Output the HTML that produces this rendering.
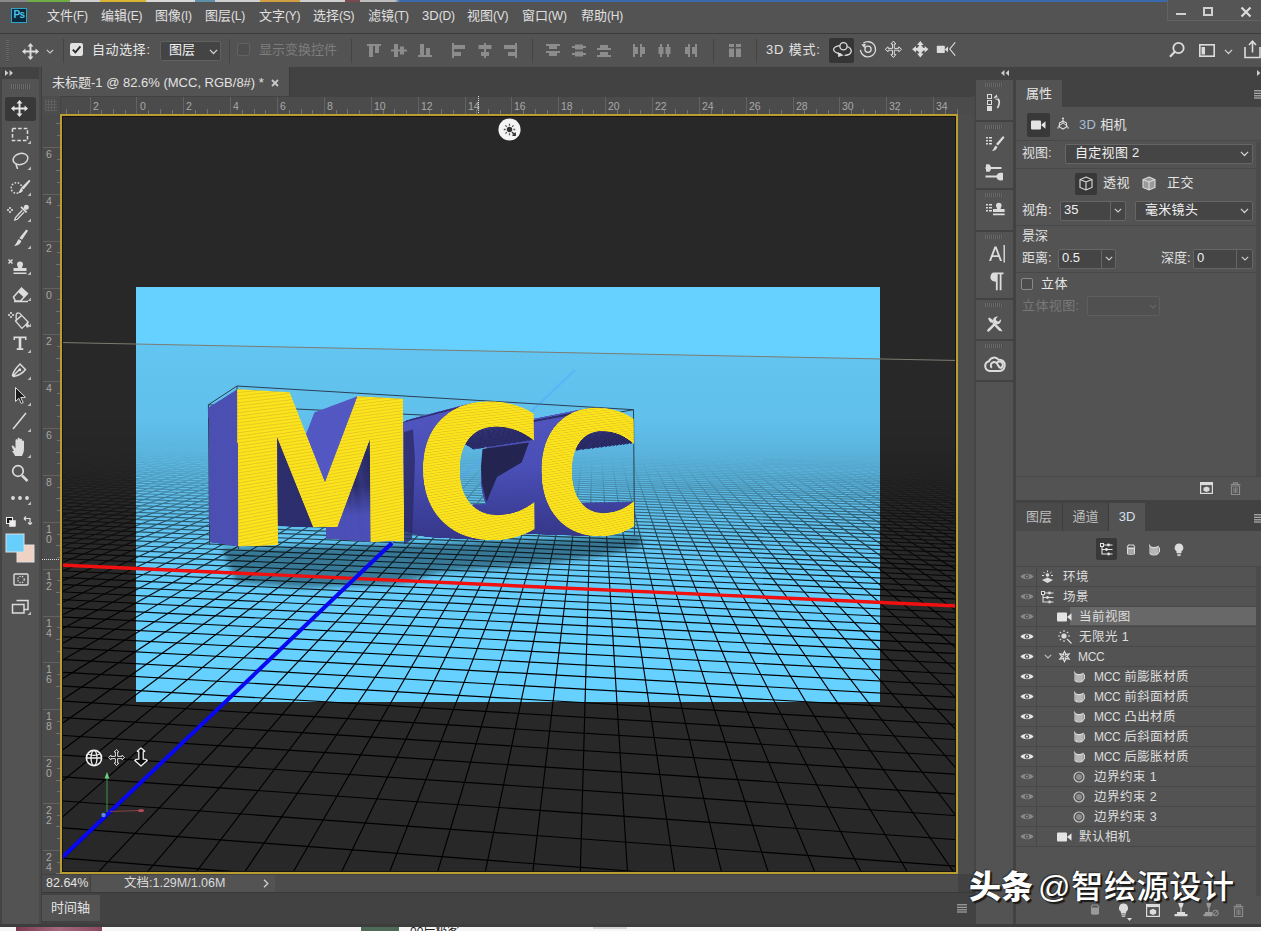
<!DOCTYPE html>
<html lang="zh-CN">
<head>
<meta charset="utf-8">
<title>Photoshop</title>
<style>
*{box-sizing:border-box;margin:0;padding:0}
html,body{width:1261px;height:931px;overflow:hidden;background:#535353}
body{position:relative;font-family:"Liberation Sans","Noto Sans CJK SC",sans-serif;font-size:13px;color:#dcdcdc;line-height:1}
.abs{position:absolute}
.t{position:absolute;white-space:nowrap;line-height:16px;height:16px}
.dk{background:#424242}
.ln{position:absolute;background:#3b3b3b}
svg{position:absolute;overflow:visible}
/* top */
#topstrip{left:0;top:0;width:1261px;height:1.5px;background:linear-gradient(90deg,#8a8a8a 0 28px,#6fae45 28px 70px,#cfcfcf 70px 100px,#d8b430 100px 146px,#d8d8d8 146px 195px,#5f8fa8 195px 215px,#d0d0d0 215px 260px,#d0a040 260px 300px,#cfcfcf 300px 345px,#7a4a52 345px 360px,#bdbdbd 360px 395px,#3a68ac 400px 100%)}
#menubar{left:0;top:2px;width:1261px;height:31px;background:#535353}
#optbar{left:0;top:34px;width:1261px;height:33px;background:#535353}
.menu .t{top:8px;font-size:13px;color:#e0e0e0}
.menu .t i{font-style:normal;font-size:12px;letter-spacing:-.2px}
/* left toolbar */
#toolbar{left:0;top:67px;width:41px;height:857px;background:#535353}
/* doc */
#tabbar{left:42px;top:67px;width:933px;height:29px;background:#424242}
#doctab{left:42px;top:67px;width:247px;height:29px;background:#535353}
#hruler{left:42px;top:96px;width:931px;height:18px;background:#4b4b4b;overflow:hidden;box-shadow:inset 0 1px 0 #424242}
#vruler{left:42px;top:114px;width:18px;height:760px;background:#4b4b4b;overflow:hidden}
.rn{position:absolute;font-size:10.5px;color:#a8a8a8;line-height:10px}
#canvas{left:60px;top:114px;width:898px;height:760px;background:#282828;overflow:hidden}
#canvasborder{left:60px;top:114px;width:898px;height:760px;border:2px solid #b99d32;box-shadow:inset 0 0 0 1px #15140f;pointer-events:none}
#status{left:42px;top:874px;width:933px;height:18px;background:#424242}
#timeline{left:42px;top:893px;width:933px;height:31px;background:#424242}
#bottomstrip{left:0;top:924px;width:1261px;height:7px;background:#f6f6f6;border-top:3px solid #3d3d3d}
/* right */
#rgap{left:975px;top:67px;width:286px;height:857px;background:#424242}
#iconcol{left:976px;top:80px;width:37px;height:844px;background:#535353}
#props{left:1016px;top:80px;width:245px;height:420px;background:#535353}
#lay{left:1016px;top:504px;width:245px;height:420px;background:#535353}
.ptabbar{position:absolute;left:0;top:0;width:245px;height:27px;background:#424242}
.ptab{position:absolute;top:0;height:27px;font-size:13px;line-height:27px;text-align:center;color:#bdbdbd;background:#4a4a4a;border-right:1px solid #3c3c3c}
.ptab.on{background:#535353;color:#e6e6e6;border-right:none}
.inp{position:absolute;background:#454545;border:1px solid #666;border-radius:2px;height:20px}
.row{position:absolute;left:0;width:245px;height:20px;border-top:1px solid #484848}
.row .t{top:2px;font-size:12.5px;color:#dedede}.row .t i{font-style:normal;font-size:12px;letter-spacing:-.35px}
.eyecol{position:absolute;left:0;top:62px;width:21px;height:281px;border-right:1px solid #484848}
</style>
</head>
<body>
<div id="topstrip" class="abs"></div>
<div id="menubar" class="abs menu"><div class="abs" style="left:11px;top:6px;width:16px;height:15px;background:#0a2a3c;border:1px solid #2fa3c8;font-size:10px;line-height:12px;color:#4cc3ea;text-align:center;font-weight:bold;letter-spacing:-.5px">Ps</div><div class="t" style="left:47px;top:6px;">文件<i>(F)</i></div><div class="t" style="left:101px;top:6px;">编辑<i>(E)</i></div><div class="t" style="left:155px;top:6px;">图像<i>(I)</i></div><div class="t" style="left:205px;top:6px;">图层<i>(L)</i></div><div class="t" style="left:259px;top:6px;">文字<i>(Y)</i></div><div class="t" style="left:313px;top:6px;">选择<i>(S)</i></div><div class="t" style="left:368px;top:6px;">滤镜<i>(T)</i></div><div class="t" style="left:422px;top:6px;">3D<i>(D)</i></div><div class="t" style="left:467px;top:6px;">视图<i>(V)</i></div><div class="t" style="left:522px;top:6px;">窗口<i>(W)</i></div><div class="t" style="left:581px;top:6px;">帮助<i>(H)</i></div><div class="abs" style="left:1167px;top:-2px;width:95px;height:21px;border:1px solid #636363;border-top:none;background:#555"></div><div class="abs" style="left:1176px;top:11px;width:10px;height:2px;background:#d0d0d0"></div><div class="abs" style="left:1203px;top:5px;width:10px;height:9px;border:2px solid #d0d0d0;border-top-width:2px"></div><svg style="left:1240px;top:4px" width="12" height="12" viewBox="0 0 12 12"><path d="M1.5 1.5l9 9M10.5 1.5l-9 9" stroke="#dcdcdc" stroke-width="2.2" fill="none"/></svg></div><div class="ln" style="left:0;top:33px;width:1261px;height:1px;background:#3a3a3a"></div>
<div id="optbar" class="abs"><div class="abs" style="left:6px;top:6px;width:3px;height:22px;background:repeating-linear-gradient(180deg,#6a6a6a 0 1px,#4a4a4a 1px 2px)"></div><svg style="left:22px;top:9px" width="17" height="17" viewBox="0 0 16 16"><path d="M8 0l2.8 3.2H8.9v3.9h3.9V5.2L16 8l-3.2 2.8V8.9H8.9v3.9h1.9L8 16l-2.8-3.2h1.9V8.9H3.2v1.9L0 8l3.2-2.8v1.9h3.9V3.2H5.2z" fill="#dcdcdc"/></svg><svg style="left:46px;top:15px" width="8" height="4.8" viewBox="0 0 10 6"><path d="M1 1l4 4 4-4" stroke="#cfcfcf" stroke-width="1.4" fill="none"/></svg><div class="ln" style="left:63px;top:5px;width:1px;height:24px;background:#444"></div><div class="abs" style="left:70px;top:9px;width:13px;height:13px;background:#e2e2e2;border-radius:2px"></div><svg style="left:71px;top:10px" width="11" height="11" viewBox="0 0 11 11"><path d="M1.8 5.6l2.6 2.8 5-6" stroke="#2a2a2a" stroke-width="1.9" fill="none"/></svg><div class="t" style="left:92px;top:8px;font-size:13px;color:#e6e6e6;letter-spacing:.6px">自动选择:</div><div class="inp" style="left:160px;top:7px;width:61px;height:20px;background:#444;border-color:#606060"></div><div class="t" style="left:169px;top:8px;font-size:13px;color:#f0f0f0">图层</div><svg style="left:209px;top:15px" width="9" height="5.4" viewBox="0 0 10 6"><path d="M1 1l4 4 4-4" stroke="#d0d0d0" stroke-width="1.4" fill="none"/></svg><div class="ln" style="left:229px;top:5px;width:1px;height:24px;background:#444"></div><div class="abs" style="left:237px;top:9px;width:13px;height:13px;border:1px solid #626262;border-radius:2px;background:#4e4e4e"></div><div class="t" style="left:259px;top:8px;font-size:13px;color:#7d7d7d">显示变换控件</div><div class="ln" style="left:351px;top:5px;width:1px;height:24px;background:#444"></div><svg style="left:366px;top:9px" width="16" height="15" viewBox="0 0 16 15"><rect x="1" y="1" width="14" height="2" fill="#8c8c8c"/><rect x="3" y="3" width="4" height="11" fill="#8c8c8c"/><rect x="9" y="3" width="4" height="7" fill="#8c8c8c"/></svg><svg style="left:391px;top:9px" width="16" height="15" viewBox="0 0 16 15"><rect x="0" y="6.5" width="16" height="2" fill="#8c8c8c"/><rect x="3" y="1" width="4" height="13" fill="#8c8c8c"/><rect x="9" y="3.5" width="4" height="8" fill="#8c8c8c"/></svg><svg style="left:417px;top:9px" width="16" height="15" viewBox="0 0 16 15"><rect x="1" y="12" width="14" height="2" fill="#8c8c8c"/><rect x="3" y="1" width="4" height="11" fill="#8c8c8c"/><rect x="9" y="5" width="4" height="7" fill="#8c8c8c"/></svg><svg style="left:451px;top:9px" width="16" height="15" viewBox="0 0 16 15"><rect x="1" y="0" width="2" height="15" fill="#8c8c8c"/><rect x="3" y="2" width="11" height="4" fill="#8c8c8c"/><rect x="3" y="9" width="7" height="4" fill="#8c8c8c"/></svg><svg style="left:477px;top:9px" width="16" height="15" viewBox="0 0 16 15"><rect x="7" y="0" width="2" height="15" fill="#8c8c8c"/><rect x="1.5" y="2" width="13" height="4" fill="#8c8c8c"/><rect x="4" y="9" width="8" height="4" fill="#8c8c8c"/></svg><svg style="left:502px;top:9px" width="16" height="15" viewBox="0 0 16 15"><rect x="13" y="0" width="2" height="15" fill="#8c8c8c"/><rect x="2" y="2" width="11" height="4" fill="#8c8c8c"/><rect x="6" y="9" width="7" height="4" fill="#8c8c8c"/></svg><svg style="left:545px;top:9px" width="16" height="15" viewBox="0 0 16 15"><rect x="1" y="1" width="14" height="2" fill="#8c8c8c"/><rect x="4" y="3" width="8" height="3" fill="#8c8c8c"/><rect x="1" y="8" width="14" height="2" fill="#8c8c8c"/><rect x="4" y="10" width="8" height="3" fill="#8c8c8c"/></svg><svg style="left:571px;top:9px" width="16" height="15" viewBox="0 0 16 15"><rect x="1" y="3" width="14" height="2" fill="#8c8c8c"/><rect x="4" y="1.5" width="8" height="5" fill="#8c8c8c"/><rect x="1" y="10" width="14" height="2" fill="#8c8c8c"/><rect x="4" y="8.5" width="8" height="5" fill="#8c8c8c"/></svg><svg style="left:596px;top:9px" width="16" height="15" viewBox="0 0 16 15"><rect x="1" y="5" width="14" height="2" fill="#8c8c8c"/><rect x="4" y="2" width="8" height="3" fill="#8c8c8c"/><rect x="1" y="12" width="14" height="2" fill="#8c8c8c"/><rect x="4" y="9" width="8" height="3" fill="#8c8c8c"/></svg><svg style="left:632px;top:9px" width="16" height="15" viewBox="0 0 16 15"><rect x="1" y="1" width="2" height="13" fill="#8c8c8c"/><rect x="3" y="4" width="3" height="7" fill="#8c8c8c"/><rect x="8" y="1" width="2" height="13" fill="#8c8c8c"/><rect x="10" y="4" width="3" height="7" fill="#8c8c8c"/></svg><svg style="left:657px;top:9px" width="16" height="15" viewBox="0 0 16 15"><rect x="3" y="1" width="2" height="13" fill="#8c8c8c"/><rect x="1.5" y="4" width="5" height="7" fill="#8c8c8c"/><rect x="10" y="1" width="2" height="13" fill="#8c8c8c"/><rect x="8.5" y="4" width="5" height="7" fill="#8c8c8c"/></svg><svg style="left:683px;top:9px" width="16" height="15" viewBox="0 0 16 15"><rect x="5" y="1" width="2" height="13" fill="#8c8c8c"/><rect x="2" y="4" width="3" height="7" fill="#8c8c8c"/><rect x="12" y="1" width="2" height="13" fill="#8c8c8c"/><rect x="9" y="4" width="3" height="7" fill="#8c8c8c"/></svg><svg style="left:727px;top:9px" width="16" height="15" viewBox="0 0 16 15"><rect x="2" y="1" width="5" height="13" fill="#8c8c8c"/><rect x="9" y="1" width="5" height="13" fill="#8c8c8c"/><rect x="2" y="4" width="12" height="1.5" fill="#535353"/></svg><div class="ln" style="left:532px;top:5px;width:1px;height:24px;background:#444"></div><div class="ln" style="left:713px;top:5px;width:1px;height:24px;background:#444"></div><div class="ln" style="left:756px;top:5px;width:1px;height:24px;background:#444"></div><div class="t" style="left:766px;top:8px;font-size:13px;color:#e0e0e0;letter-spacing:.8px">3D 模式:</div><div class="abs" style="left:829px;top:4px;width:25px;height:25px;background:#353535;border-radius:2px"></div><svg style="left:826px;top:4px" width="134" height="26" viewBox="826 38 134 26"><g fill="none" stroke="#dcdcdc" stroke-width="1.3"><circle cx="843.5" cy="46.3" r="3.6"/><path d="M839.9 45.6c-3.6 0.200-6.800 2-6.300 4.200 0.500 2.200 4 3.600 7.500 4.400M847.200 46.500c2.500 1 4.200 2.800 4 4.800-0.300 2.400-3.300 3.800-6.500 4.100" /><circle cx="868" cy="49.3" r="7.600" stroke-dasharray="40 7.800" transform="rotate(-128 868 49.3)"/><circle cx="868" cy="49.3" r="3.100"/><path d="M893.4 41.1L895.9 44.0L894.3 44.0L894.3 48.4L898.7 48.4L898.7 46.8L901.6 49.3L898.7 51.8L898.7 50.2L894.3 50.2L894.3 54.6L895.9 54.6L893.4 57.5L890.9 54.6L892.5 54.6L892.5 50.2L888.1 50.2L888.1 51.8L885.2 49.3L888.1 46.8L888.1 48.4L892.5 48.4L892.5 44.0L890.9 44.0z" stroke-width="1"/><path d="M955.200 42.300l-5.400 6.700 5.400 6.700" stroke-width="1.100"/></g><g fill="#dcdcdc"><path d="M838 52.300l5.800 2.900-5.600 1.800z"/><path d="M861.300 44.600l4.600-.9-1.500 4.300z"/><circle cx="920.300" cy="49.200" r="3.100"/><path d="M920.300 41l3.300 3.900h-2v2h-2.600v-2h-2zM920.300 57.400l3.300-3.900h-2v-2h-2.600v2h-2zM912.100 49.200l3.900-3.300v2h2v2.600h-2v2zM928.500 49.200l-3.900-3.300v2h-2v2.600h2v2z"/><rect x="936.800" y="45.700" width="8" height="7.400" rx=".8"/><path d="M944.800 49.400l3.200-2.900v5.800z"/></g></svg><svg style="left:1168px;top:7px" width="18" height="18" viewBox="0 0 18 18"><circle cx="10.5" cy="7" r="5.2" fill="none" stroke="#dcdcdc" stroke-width="1.8"/><path d="M6.8 10.8L2 15.8" stroke="#dcdcdc" stroke-width="2.2"/></svg><svg style="left:1199px;top:10px" width="16" height="13" viewBox="0 0 16 13"><rect x=".8" y=".8" width="14.4" height="11.4" fill="none" stroke="#dcdcdc" stroke-width="1.6"/><rect x="2.5" y="3" width="3.5" height="7.5" fill="#dcdcdc"/></svg><svg style="left:1224px;top:15px" width="9" height="5.4" viewBox="0 0 10 6"><path d="M1 1l4 4 4-4" stroke="#cfcfcf" stroke-width="1.4" fill="none"/></svg><svg style="left:1244px;top:6px" width="17" height="19" viewBox="0 0 17 19"><path d="M1 7v10.5h15V7" fill="none" stroke="#dcdcdc" stroke-width="1.6"/><path d="M8.5 12.5V2M5 5l3.5-3.8L12 5" fill="none" stroke="#dcdcdc" stroke-width="1.6"/></svg></div>
<div id="toolbar" class="abs"><div class="abs dk" style="left:0;top:0;width:41px;height:12px"></div><div class="abs" style="left:0;top:0;width:2px;height:857px;background:#444"></div><div class="abs" style="left:39px;top:0;width:2px;height:857px;background:#4a4a4a"></div><svg style="left:5px;top:3px" width="9" height="6" viewBox="0 0 9 6"><path d="M0 0l3.4 3L0 6zM4.6 0L8 3 4.6 6z" fill="#cfcfcf"/></svg><div class="abs" style="left:11px;top:17px;width:19px;height:5px;background:repeating-linear-gradient(90deg,#6c6c6c 0 1px,#4a4a4a 1px 2px)"></div><div class="abs" style="left:5px;top:30px;width:31px;height:24px;background:#383838;border-radius:3px"></div><svg style="left:11px;top:33px" width="17" height="17" viewBox="0 0 16 16"><path d="M8 0l2.8 3.2H8.9v3.9h3.9V5.2L16 8l-3.2 2.8V8.9H8.9v3.9h1.9L8 16l-2.8-3.2h1.9V8.9H3.2v1.9L0 8l3.2-2.8v1.9h3.9V3.2H5.2z" fill="#e6e6e6"/></svg>
<svg style="left:0;top:0" width="41" height="560" viewBox="0 67 41 560">
<g fill="none" stroke="#dcdcdc" stroke-width="1.5">
<rect x="12.500" y="128.500" width="15" height="12" stroke-dasharray="3.6 2"/>
<ellipse cx="20.500" cy="159" rx="7.500" ry="5.500" transform="rotate(-15 20.500 159)"/>
<path d="M16.500 163.500c-1.500 1.500 1 3.500 1 5.500"/>
<circle cx="16.500" cy="188" r="5.300" stroke-dasharray="1.600 1.600"/>

<path d="M22.300 210.300l-6.800 7.200-.8 2.600 2.600-.8 6.800-7.200" stroke-width="1.300"/><path d="M21 206.800l5.600 5.600" stroke-width="1.800"/>

<path d="M13.500 297l8-9 6 5.500-7 7.500h-5zM14 301.500h14"/>
<path d="M15.500 321l6.200-5.600 6.600 6.800-6.400 6.200zM21.700 315.400c-2.600-4-5.800-3-5.600.8l.2 4" stroke-width="1.300"/>
<path d="M12.500 375.500c1-5 4-8 7.500-11.500l5.500 5.500c-3 4-7 6-12 7zM13 376l6-6"/>
<circle cx="19.800" cy="369.800" r="1.500" fill="#dcdcdc" stroke="none"/>
<path d="M13 429l13-16"/>
<circle cx="18" cy="471" r="5.300" stroke-width="1.700"/><path d="M22 475.500l5.500 5.500" stroke-width="2.500"/>
<rect x="14" y="574" width="14" height="11" rx="1" stroke-width="1.400"/><circle cx="21" cy="579.500" r="3.200" stroke-dasharray="1.300 1.300" stroke-width="1.200"/>
<path d="M16.500 600.500h11.500v9h-4M12.500 604.500h11.500v8.500h-11.500z" stroke-width="1.500"/>
</g>
<g fill="#dcdcdc">
<path d="M29.200 179.800l1.300 1.200-6.800 8.300-2.300-1.700zM20.800 188.300l2.300 1.700c-1 2.300-2.800 3.200-5 3.100 1.300-1.200 1.500-2.800 2.700-4.800z"/>
<circle cx="26.300" cy="207.300" r="2.500"/><path d="M23.800 207.600l2.200 2.200 1.500-1.500-2.200-2.200z"/><path d="M26.300 229.500l1.700 1.300-6 9-2.600-1.900zM18.800 239l2.600 1.900c-1 2.800-3.200 4.600-7.400 5.300 1.800-1.700 2.800-4.300 4.800-7.200z"/>
<path d="M17 264.500a3 3 0 1 1 6 0c0 1.500-1 2-1 3.500h4.500v3h-13v-3h4.500c0-1.500-1-2-1-3.500zM13.500 272.500h13v1.500h-13z"/>
<path d="M9 259l1.500 1.500 1.500-1.500 1 1-1.500 1.500 1.500 1.500-1 1-1.500-1.500-1.500 1.500-1-1 1.500-1.500-1.500-1.500z"/>
<path d="M21.500 288l6 5.500-3.500 4-6-5.500z"/>
<path d="M10 312h2v2h-2zM12 314h2v2h-2zM8 314h2v2h-2zM10 316h2v2h-2z" opacity=".8"/>
<path d="M27 322c1.500 2 2 3 2 4a1.500 1.500 0 0 1-3 0c0-1 .3-2 1-4z"/>
<path d="M13.500 336.500h13v3.500h-1.500v-1.700h-3.700v10h2v1.700h-6.600v-1.700h2v-10h-3.700v1.700h-1.500z"/>
<path d="M15.500 387.500l0 14 3.300-3.200 2.400 5.200 2-0.900-2.400-5.100 4.700-.2z" fill="#1c1c1c" stroke="#dcdcdc" stroke-width="1"/>
<path transform="translate(0 3)" d="M14 448c-1.500-3-3-5-2-5.500 1.200-.6 2.500 1.500 3.500 3v-8c0-1.600 2-1.600 2.100 0v-1.500c0-1.600 2.100-1.600 2.200 0v1c0-1.600 2.100-1.600 2.200 0v1.500c0-1.500 2-1.500 2 0v7c0 4-1.500 6-2 7.500h-7c-.5-1.500-1.500-3-3-5z"/>
<circle cx="13" cy="498" r="1.900"/><circle cx="20" cy="498" r="1.900"/><circle cx="27" cy="498" r="1.900"/>
<path d="M31 144l0 -3.5 -3.5 3.5z" fill="#bdbdbd"/><path d="M31 170l0 -3.5 -3.5 3.5z" fill="#bdbdbd"/><path d="M31 196l0 -3.5 -3.5 3.5z" fill="#bdbdbd"/><path d="M31 222l0 -3.5 -3.5 3.5z" fill="#bdbdbd"/><path d="M31 249l0 -3.5 -3.5 3.5z" fill="#bdbdbd"/><path d="M31 275l0 -3.5 -3.5 3.5z" fill="#bdbdbd"/><path d="M31 301l0 -3.5 -3.5 3.5z" fill="#bdbdbd"/><path d="M31 327l0 -3.5 -3.5 3.5z" fill="#bdbdbd"/><path d="M31 353l0 -3.5 -3.5 3.5z" fill="#bdbdbd"/><path d="M31 380l0 -3.5 -3.5 3.5z" fill="#bdbdbd"/><path d="M31 406l0 -3.5 -3.5 3.5z" fill="#bdbdbd"/><path d="M31 432l0 -3.5 -3.5 3.5z" fill="#bdbdbd"/><path d="M31 458l0 -3.5 -3.5 3.5z" fill="#bdbdbd"/><path d="M31 505l0 -3.5 -3.5 3.5z" fill="#bdbdbd"/><path d="M31 615l0 -3.5 -3.5 3.5z" fill="#bdbdbd"/>
</g>
<path d="M9 207h2v2h-2zM11 209h2v2h-2zM7 209h2v2h-2zM9 211h2v2h-2z" fill="#dcdcdc" opacity=".8"/>
<rect x="6.500" y="517.500" width="6" height="6" fill="#111" stroke="#eee" stroke-width="1"/><rect x="9.500" y="520.500" width="6" height="6" fill="#eee" stroke="#eee" stroke-width=".5"/>
<path d="M24 518.500h6v6M24 518.500l2-2M24 518.500l2 2M30 524.500l-2-2M30 524.500l2-2" stroke="#dcdcdc" stroke-width="1.200" fill="none"/>
<rect x="17" y="545" width="17" height="17" fill="#efd2c3" stroke="#ddd" stroke-width="1"/>
<rect x="6" y="534" width="18" height="18" fill="#66cffe" stroke="#ddd" stroke-width="1"/>

</svg>
</div><div class="ln" style="left:41px;top:67px;width:1px;height:857px;background:#3e3e3e"></div>
<div id="tabbar" class="abs"></div><div id="doctab" class="abs"><div class="t" style="left:10px;top:8px;font-size:13px;color:#e2e2e2">未标题-1 @ 82.6% (MCC, RGB/8#) *</div><svg style="left:229px;top:12px" width="8" height="8" viewBox="0 0 8 8"><path d="M1 1l6 6M7 1L1 7" stroke="#c8c8c8" stroke-width="1.8"/></svg></div><div class="ln" style="left:289px;top:67px;width:1px;height:29px;background:#3a3a3a"></div><div id="hruler" class="abs"><div class="abs" style="left:0;top:0;width:18px;height:18px;background:#4d4d4d"></div><div class="abs" style="left:3px;top:3px;width:12px;height:12px;background:repeating-linear-gradient(90deg,#5e5e5e 0 1px,transparent 1px 3px),repeating-linear-gradient(0deg,#5e5e5e 0 1px,transparent 1px 3px)"></div><svg style="left:0;top:0" width="916" height="18" viewBox="42 96 916 18"><path d="M90.5 97v17M136.5 97v17M183.5 97v17M230.5 97v17M277.5 97v17M324.5 97v17M371.5 97v17M418.5 97v17M465.5 97v17M511.5 97v17M558.5 97v17M605.5 97v17M652.5 97v17M699.5 97v17M746.5 97v17M793.5 97v17M839.5 97v17M886.5 97v17M933.5 97v17" stroke="#626262" stroke-width="1" fill="none"/><path d="M66.5 109v5M78.5 110v4M101.5 110v4M113.5 109v5M125.5 110v4M148.5 110v4M160.5 109v5M172.5 110v4M195.5 110v4M207.5 109v5M219.5 110v4M242.5 110v4M254.5 109v5M265.5 110v4M289.5 110v4M301.5 109v5M312.5 110v4M336.5 110v4M347.5 109v5M359.5 110v4M383.5 110v4M394.5 109v5M406.5 110v4M429.5 110v4M441.5 109v5M453.5 110v4M476.5 110v4M488.5 109v5M500.5 110v4M523.5 110v4M535.5 109v5M547.5 110v4M570.5 110v4M582.5 109v5M593.5 110v4M617.5 110v4M629.5 109v5M640.5 110v4M664.5 110v4M675.5 109v5M687.5 110v4M711.5 110v4M722.5 109v5M734.5 110v4M757.5 110v4M769.5 109v5M781.5 110v4M804.5 110v4M816.5 109v5M828.5 110v4M851.5 110v4M863.5 109v5M875.5 110v4M898.5 110v4M910.5 109v5M921.5 110v4M945.5 110v4M957.5 109v5" stroke="#727272" stroke-width="1" fill="none"/><path d="M60.5 96v18" stroke="#444" stroke-width="1"/></svg><div class="rn" style="left:51px;top:5px">2</div><div class="rn" style="left:98px;top:5px">0</div><div class="rn" style="left:144px;top:5px">2</div><div class="rn" style="left:191px;top:5px">4</div><div class="rn" style="left:238px;top:5px">6</div><div class="rn" style="left:285px;top:5px">8</div><div class="rn" style="left:332px;top:5px">10</div><div class="rn" style="left:379px;top:5px">12</div><div class="rn" style="left:426px;top:5px">14</div><div class="rn" style="left:472px;top:5px">16</div><div class="rn" style="left:519px;top:5px">18</div><div class="rn" style="left:566px;top:5px">20</div><div class="rn" style="left:613px;top:5px">22</div><div class="rn" style="left:660px;top:5px">24</div><div class="rn" style="left:707px;top:5px">26</div><div class="rn" style="left:754px;top:5px">28</div><div class="rn" style="left:800px;top:5px">30</div><div class="rn" style="left:847px;top:5px">32</div><div class="rn" style="left:894px;top:5px">34</div><div class="abs" style="left:436px;top:0;width:1px;height:18px;background:repeating-linear-gradient(180deg,#ddd 0 1px,transparent 1px 2px)"></div></div><div id="vruler" class="abs"><svg style="left:0;top:0" width="18" height="760" viewBox="42 114 18 760"><path d="M43 147.5h17M43 194.5h17M43 241.5h17M43 288.5h17M43 334.5h17M43 381.5h17M43 428.5h17M43 475.5h17M43 522.5h17M43 569.5h17M43 616.5h17M43 662.5h17M43 709.5h17M43 756.5h17M43 803.5h17M43 850.5h17" stroke="#626262" stroke-width="1" fill="none"/><path d="M56 123.5h4M57 135.5h3M57 159.5h3M56 170.5h4M57 182.5h3M57 205.5h3M56 217.5h4M57 229.5h3M57 252.5h3M56 264.5h4M57 276.5h3M57 299.5h3M56 311.5h4M57 323.5h3M57 346.5h3M56 358.5h4M57 370.5h3M57 393.5h3M56 405.5h4M57 416.5h3M57 440.5h3M56 452.5h4M57 463.5h3M57 487.5h3M56 498.5h4M57 510.5h3M57 534.5h3M56 545.5h4M57 557.5h3M57 580.5h3M56 592.5h4M57 604.5h3M57 627.5h3M56 639.5h4M57 651.5h3M57 674.5h3M56 686.5h4M57 698.5h3M57 721.5h3M56 733.5h4M57 744.5h3M57 768.5h3M56 780.5h4M57 791.5h3M57 815.5h3M56 826.5h4M57 838.5h3M57 862.5h3M56 873.5h4" stroke="#727272" stroke-width="1" fill="none"/></svg><div class="rn" style="left:4px;top:35px">6</div><div class="rn" style="left:4px;top:82px">4</div><div class="rn" style="left:4px;top:129px">2</div><div class="rn" style="left:4px;top:176px">0</div><div class="rn" style="left:4px;top:222px">2</div><div class="rn" style="left:4px;top:269px">4</div><div class="rn" style="left:4px;top:316px">6</div><div class="rn" style="left:4px;top:363px">8</div><div class="rn" style="left:4px;top:410px">1</div><div class="rn" style="left:4px;top:420px">0</div><div class="rn" style="left:4px;top:457px">1</div><div class="rn" style="left:4px;top:467px">2</div><div class="rn" style="left:4px;top:504px">1</div><div class="rn" style="left:4px;top:514px">4</div><div class="rn" style="left:4px;top:550px">1</div><div class="rn" style="left:4px;top:560px">6</div><div class="rn" style="left:4px;top:597px">1</div><div class="rn" style="left:4px;top:607px">8</div><div class="rn" style="left:4px;top:644px">2</div><div class="rn" style="left:4px;top:654px">0</div><div class="rn" style="left:4px;top:691px">2</div><div class="rn" style="left:4px;top:701px">2</div><div class="rn" style="left:4px;top:738px">2</div><div class="rn" style="left:4px;top:748px">4</div><div class="abs" style="left:0;top:445px;width:18px;height:1px;background:repeating-linear-gradient(90deg,#ddd 0 1px,transparent 1px 2px)"></div></div><div id="canvas" class="abs"><svg style="left:0;top:0" width="898" height="760" viewBox="60 114 898 760"><defs><linearGradient id="sky" gradientUnits="userSpaceOnUse" x1="0" y1="340" x2="0" y2="640"><stop offset="0" stop-color="#63c5f1"/><stop offset="0.25" stop-color="#61c0ec"/><stop offset="0.45" stop-color="#5fbde8"/><stop offset="0.62" stop-color="#61c3f0"/><stop offset="0.8" stop-color="#65cdfb"/><stop offset="1" stop-color="#66d0ff"/></linearGradient><linearGradient id="fade" gradientUnits="userSpaceOnUse" x1="0" y1="420" x2="0" y2="640"><stop offset="0" stop-color="#fff" stop-opacity="0"/><stop offset="0.14" stop-color="#fff" stop-opacity=".05"/><stop offset="0.23" stop-color="#fff" stop-opacity=".13"/><stop offset="0.32" stop-color="#fff" stop-opacity=".28"/><stop offset="0.41" stop-color="#fff" stop-opacity=".46"/><stop offset="0.5" stop-color="#fff" stop-opacity=".62"/><stop offset="0.6" stop-color="#fff" stop-opacity=".76"/><stop offset="0.75" stop-color="#fff" stop-opacity=".9"/><stop offset="1" stop-color="#fff" stop-opacity="1"/></linearGradient><mask id="gm" maskUnits="userSpaceOnUse" x="60" y="114" width="898" height="760"><rect x="60" y="114" width="898" height="760" fill="url(#fade)"/></mask><filter id="bl" x="-20%" y="-50%" width="140%" height="200%"><feGaussianBlur stdDeviation="2.6"/></filter></defs><rect x="136" y="287" width="744" height="415" fill="#66d1ff"/><path d="M136 344L880 358.9V702H136z" fill="url(#sky)"/><path d="M60 342.5L958 360.5" stroke="#7c7c72" stroke-width="1" fill="none"/><g filter="url(#bl)" opacity=".5"><path d="M222 548L300 547 420 544 540 540 640 536 642 546 600 556 530 566 440 572 400 584 300 588 236 582z" fill="#0a2a38"/></g><g mask="url(#gm)" stroke="#000" stroke-width="1.15" fill="none"><path d="M60 857.8L958 929.5M60 827.6L958 896.1M60 800.7L958 866.4M60 776.6L958 839.8M60 754.8L958 815.8M60 735.2L958 794.1M60 717.3L958 774.4M60 700.9L958 756.3M60 685.9L958 739.8M60 672.1L958 724.5M60 659.4L958 710.4M60 647.6L958 697.4M60 636.6L958 685.3M60 626.4L958 674M60 616.8L958 663.5M60 607.9L958 653.6M60 599.5L958 644.4M60 591.7L958 635.7M60 584.3L958 627.5M60 577.3L958 619.8M60 570.7L958 612.5M60 564.4L958 605.6M60 558.5L958 599.1M60 552.9L958 592.9M60 547.5L958 587M60 542.5L958 581.4M60 537.6L958 576M60 533L958 570.9M60 528.6L958 566.1M60 524.4L958 561.4M60 520.4L958 557M60 516.5L958 552.7M60 512.8L958 548.7M60 509.3L958 544.7M60 505.9L958 541M60 502.6L958 537.4M60 499.5L958 533.9M60 496.4L958 530.6M60 493.5L958 527.3M60 490.7L958 524.2M60 488L958 521.2M60 485.4L958 518.4M60 482.9L958 515.6M60 480.4L958 512.9M60 478.1L958 510.3M60 475.8L958 507.7M60 473.6L958 505.3M60 471.4L958 502.9M60 469.3L958 500.7M60 467.3L958 498.4M60 465.4L958 496.3M60 463.5L958 494.2M60 461.7L958 492.2M60 459.9L958 490.2M60 458.2L958 488.3M60 456.5L958 486.4M60 454.8L958 484.6M60 453.2L958 482.9M60 451.7L958 481.2M60 450.2L958 479.5M60 448.7L958 477.9M60 447.3L958 476.3M60 445.9L958 474.8M60 444.5L958 473.3M60 443.2L958 471.8M60 441.9L958 470.4M60 440.7L958 469M60 439.4L958 467.6M60 438.2L958 466.3M60 437.1L958 465M60 435.9L958 463.8M60 434.8L958 462.5M60 433.7L958 461.3M60 432.7L958 460.1M60 431.6L958 459M60 430.6L958 457.9M60 429.6L958 456.8M60 428.6L958 455.7M60 427.6L958 454.6M60 426.7L958 453.6M60 425.8L958 452.6M60 424.9L958 451.6M60 424L958 450.6M60 423.2L958 449.7M60 422.3L958 448.7M60 421.5L958 447.8M60 420.7L958 446.9M60 419.9L958 446M60 419.1L958 445.2M60 418.3L958 444.3M60 417.6L958 443.5M60 416.8L958 442.7M60 416.1L958 441.9M60 415.4L958 441.1M60 414.7L958 440.3M60 414L958 439.6M60 413.3L958 438.8M60 412.7L958 438.1M60 412L958 437.4M60 411.4L958 436.7M60 410.8L958 436M60 410.1L958 435.3M60 409.5L958 434.6M60 408.9L958 434M60 408.4L958 433.3M60 407.8L958 432.7M60 407.2L958 432.1M60 406.6L958 431.4M60 406.1L958 430.8M60 405.6L958 430.2M60 405L958 429.7M60 404.5L958 429.1M60 404L958 428.5M60 403.5L958 427.9M60 403L958 427.4M60 402.5L958 426.9M60 402L958 426.3M60 401.5L958 425.8M60 401.1L958 425.3M60 400.6L958 424.8M60 400.1L958 424.3M60 399.7L958 423.8M60 399.2L958 423.3M60 398.8L958 422.8M60 398.4L958 422.3M60 398L958 421.8M60 397.5L958 421.4M60 397.1L958 420.9M60 396.7L958 420.5M60 396.3L958 420M60 395.9L958 419.6M60 395.5L958 419.2M60 395.1L958 418.7M60 394.8L958 418.3M60 394.4L958 417.9M60 394L958 417.5M60 393.7L958 417.1M60 393.3L958 416.7M60 392.9L958 416.3M60 392.6L958 415.9M60 392.2L958 415.5M60 391.9L958 415.2M60 391.6L958 414.8M60 391.2L958 414.4M60 390.9L958 414.1M60 390.6L958 413.7M60 390.2L958 413.3M60 389.9L958 413M60 389.6L958 412.6M60 389.3L958 412.3M60 389L958 412M60 388.7L958 411.6M60 388.4L958 411.3M60 388.1L958 411M60 387.8L958 410.7M60 387.5L958 410.3M60 387.2L958 410M60 387L958 409.7M60 386.7L958 409.4M60 386.4L958 409.1M60 386.1L958 408.8M60 385.9L958 408.5M60 385.6L958 408.2M60 385.3L958 407.9M60 385.1L958 407.6M60 384.8L958 407.3M60 384.6L958 407.1M60 384.3L958 406.8M60 384.1L958 406.5M60 383.8L958 406.2M60 383.6L958 406M60 383.3L958 405.7M60 383.1L958 405.4M60 382.9L958 405.2M60 382.6L958 404.9M60 382.4L958 404.7M60 382.2L958 404.4M60 381.9L958 404.2M60 381.7L958 403.9M60 381.5L958 403.7M60 381.3L958 403.4M60 381.1L958 403.2M60 380.8L958 403M60 380.6L958 402.7M60 380.4L958 402.5M60 380.2L958 402.3M60 380L958 402M60 379.8L958 401.8M60 379.6L958 401.6M60 379.4L958 401.4M60 379.2L958 401.1M60 379L958 400.9M60 378.8L958 400.7M60 378.6L958 400.5M60 378.4L958 400.3M60 378.2L958 400.1M60 378L958 399.9M60 377.9L958 399.7M60 377.7L958 399.5M60 377.5L958 399.3M60 377.3L958 399.1M60 377.1L958 398.9M60 377L958 398.7M60 376.8L958 398.5M60 376.6L958 398.3M60 376.4L958 398.1M60 376.3L958 397.9M60 376.1L958 397.7M60 375.9L958 397.5M60 375.8L958 397.3M60 375.6L958 397.2M60 375.4L958 397M60 375.3L958 396.8M60 375.1L958 396.6M60 374.9L958 396.4M60 374.8L958 396.3M60 374.6L958 396.1M60 374.5L958 395.9M60 374.3L958 395.8M60 374.2L958 395.6M60 374L958 395.4M60 373.9L958 395.3M60 373.7L958 395.1M60 373.6L958 394.9M60 373.4L958 394.8M60 373.3L958 394.6M60 373.1L958 394.5M60 373L958 394.3M60 372.9L958 394.1M60 372.7L958 394M60 372.6L958 393.8M60 372.4L958 393.7M60 372.3L958 393.5M60 372.2L958 393.4M60 372L958 393.2M60 371.9L958 393.1M60 371.8L958 392.9M60 371.6L958 392.8M60 371.5L958 392.6M60 371.4L958 392.5M60 371.2L958 392.4M60 371.1L958 392.2M60 371L958 392.1M60 370.9L958 391.9M60 370.7L958 391.8M60 370.6L958 391.7M60 370.5L958 391.5M60 370.4L958 391.4M60 370.2L958 391.3M60 370.1L958 391.1M60 370L958 391M60 369.9L958 390.9M60 369.8L958 390.7M60 369.7L958 390.6M60 369.5L958 390.5M60 369.4L958 390.4M60 369.3L958 390.2M60 369.2L958 390.1M60 369.1L958 390M60 369L958 389.9M60 368.9L958 389.7M60 368.8L958 389.6"/><path d="M-10254.3 879L148.5 370.8M-10160.1 879L151.1 370.9M-10066.4 879L153.8 370.9M-9973.2 879L156.4 371M-9880.4 879L159 371.1M-9788.1 879L161.7 371.1M-9696.2 879L164.3 371.2M-9604.8 879L167 371.2M-9513.9 879L169.6 371.3M-9423.3 879L172.3 371.4M-9333.3 879L174.9 371.4M-9243.6 879L177.6 371.5M-9154.4 879L180.2 371.5M-9065.7 879L182.9 371.6M-8977.3 879L185.5 371.7M-8889.4 879L188.2 371.7M-8801.9 879L190.8 371.8M-8714.9 879L193.5 371.9M-8628.2 879L196.2 371.9M-8542 879L198.8 372M-8456.1 879L201.5 372M-8370.7 879L204.2 372.1M-8285.7 879L206.8 372.2M-8201.1 879L209.5 372.2M-8116.9 879L212.2 372.3M-8033.1 879L214.8 372.4M-7949.6 879L217.5 372.4M-7866.6 879L220.2 372.5M-7784 879L222.9 372.5M-7701.7 879L225.5 372.6M-7619.8 879L228.2 372.7M-7538.4 879L230.9 372.7M-7457.2 879L233.6 372.8M-7376.5 879L236.3 372.9M-7296.1 879L239 372.9M-7216.1 879L241.6 373M-7136.5 879L244.3 373M-7057.2 879L247 373.1M-6978.3 879L249.7 373.2M-6899.8 879L252.4 373.2M-6821.6 879L255.1 373.3M-6743.8 879L257.8 373.4M-6666.3 879L260.5 373.4M-6589.2 879L263.2 373.5M-6512.4 879L265.9 373.5M-6435.9 879L268.6 373.6M-6359.9 879L271.3 373.7M-6284.1 879L274 373.7M-6208.7 879L276.8 373.8M-6133.6 879L279.5 373.9M-6058.9 879L282.2 373.9M-5984.5 879L284.9 374M-5910.4 879L287.6 374M-5836.6 879L290.3 374.1M-5763.2 879L293.1 374.2M-5690.1 879L295.8 374.2M-5617.3 879L298.5 374.3M-5544.8 879L301.2 374.4M-5472.7 879L303.9 374.4M-5400.8 879L306.7 374.5M-5329.3 879L309.4 374.5M-5258.1 879L312.1 374.6M-5187.2 879L314.9 374.7M-5116.6 879L317.6 374.7M-5046.3 879L320.3 374.8M-4976.3 879L323.1 374.9M-4906.6 879L325.8 374.9M-4837.3 879L328.6 375M-4768.2 879L331.3 375.1M-4699.4 879L334.1 375.1M-4630.9 879L336.8 375.2M-4562.6 879L339.6 375.2M-4494.7 879L342.3 375.3M-4427.1 879L345.1 375.4M-4359.7 879L347.8 375.4M-4292.7 879L350.6 375.5M-4225.9 879L353.3 375.6M-4159.4 879L356.1 375.6M-4093.1 879L358.8 375.7M-4027.2 879L361.6 375.8M-3961.5 879L364.4 375.8M-3896.1 879L367.1 375.9M-3831 879L369.9 376M-3766.1 879L372.7 376M-3701.5 879L375.4 376.1M-3637.2 879L378.2 376.1M-3573.1 879L381 376.2M-3509.3 879L383.8 376.3M-3445.8 879L386.5 376.3M-3382.5 879L389.3 376.4M-3319.5 879L392.1 376.5M-3256.8 879L394.9 376.5M-3194.2 879L397.7 376.6M-3132 879L400.5 376.7M-3070 879L403.2 376.7M-3008.3 879L406 376.8M-2946.8 879L408.8 376.9M-2885.5 879L411.6 376.9M-2824.5 879L414.4 377M-2763.7 879L417.2 377.1M-2703.2 879L420 377.1M-2642.9 879L422.8 377.2M-2582.9 879L425.6 377.2M-2523.1 879L428.4 377.3M-2463.6 879L431.2 377.4M-2404.2 879L434 377.4M-2345.1 879L436.8 377.5M-2286.3 879L439.7 377.6M-2227.7 879L442.5 377.6M-2169.3 879L445.3 377.7M-2111.1 879L448.1 377.8M-2053.2 879L450.9 377.8M-1995.5 879L453.7 377.9M-1938 879L456.6 378M-1880.7 879L459.4 378M-1823.7 879L462.2 378.1M-1766.9 879L465 378.2M-1710.3 879L467.9 378.2M-1653.9 879L470.7 378.3M-1597.7 879L473.5 378.4M-1541.8 879L476.4 378.4M-1486.1 879L479.2 378.5M-1430.5 879L482 378.6M-1375.2 879L484.9 378.6M-1320.2 879L487.7 378.7M-1265.3 879L490.6 378.8M-1210.6 879L493.4 378.8M-1156.1 879L496.2 378.9M-1101.9 879L499.1 379M-1047.8 879L501.9 379M-994 879L504.8 379.1M-940.3 879L507.6 379.2M-886.9 879L510.5 379.2M-833.6 879L513.4 379.3M-780.6 879L516.2 379.4M-727.7 879L519.1 379.4M-675.1 879L521.9 379.5M-622.6 879L524.8 379.6M-570.4 879L527.7 379.6M-518.3 879L530.5 379.7M-466.5 879L533.4 379.8M-414.8 879L536.3 379.8M-363.3 879L539.2 379.9M-312 879L542 380M-260.9 879L544.9 380M-210 879L547.8 380.1M-159.2 879L550.7 380.2M-108.7 879L553.5 380.2M-58.3 879L556.4 380.3M-8.1 879L559.3 380.4M41.9 879L562.2 380.4M91.7 879L565.1 380.5M141.3 879L568 380.6M190.8 879L570.9 380.6M240 879L573.8 380.7M289.1 879L576.7 380.8M338.1 879L579.6 380.8M386.8 879L582.5 380.9M435.4 879L585.4 381M483.8 879L588.3 381M532 879L591.2 381.1M580.1 879L594.1 381.2M627.9 879L597 381.2M675.7 879L599.9 381.3M723.2 879L602.8 381.4M770.6 879L605.7 381.4M817.8 879L608.7 381.5M864.8 879L611.6 381.6M911.7 879L614.5 381.6M958.4 879L617.4 381.7M1004.9 879L620.3 381.8M1051.3 879L623.3 381.8M1097.5 879L626.2 381.9M1143.6 879L629.1 382M1189.5 879L632.1 382M1235.2 879L635 382.1M1280.8 879L637.9 382.2M1326.2 879L640.9 382.2M1371.5 879L643.8 382.3M1416.6 879L646.8 382.4M1461.6 879L649.7 382.5M1506.4 879L652.6 382.5M1551 879L655.6 382.6M1595.5 879L658.5 382.7M1639.8 879L661.5 382.7M1684 879L664.4 382.8M1728 879L667.4 382.9M1771.9 879L670.4 382.9M1815.7 879L673.3 383M1859.2 879L676.3 383.1M1902.7 879L679.2 383.1M1946 879L682.2 383.2M1989.1 879L685.2 383.3M2032.1 879L688.1 383.3M2075 879L691.1 383.4M2117.7 879L694.1 383.5M2160.3 879L697 383.6M2202.7 879L700 383.6M2245 879L703 383.7M2287.1 879L706 383.8M2329.1 879L709 383.8M2371 879L711.9 383.9M2412.7 879L714.9 384M2454.3 879L717.9 384M2495.7 879L720.9 384.1M2537 879L723.9 384.2M2578.2 879L726.9 384.2M2619.2 879L729.9 384.3M2660.1 879L732.9 384.4M2700.9 879L735.9 384.5M2741.5 879L738.9 384.5M2782 879L741.9 384.6M2822.4 879L744.9 384.7M2862.6 879L747.9 384.7M2902.7 879L750.9 384.8M2942.7 879L753.9 384.9M2982.5 879L756.9 384.9M3022.3 879L759.9 385M3061.8 879L763 385.1M3101.3 879L766 385.2M3140.6 879L769 385.2M3179.8 879L772 385.3M3218.9 879L775 385.4M3257.9 879L778.1 385.4M3296.7 879L781.1 385.5M3335.4 879L784.1 385.6M3374 879L787.2 385.6M3412.4 879L790.2 385.7M3450.8 879L793.2 385.8M3489 879L796.3 385.9M3527.1 879L799.3 385.9M3565 879L802.3 386M3602.9 879L805.4 386.1M3640.6 879L808.4 386.1M3678.2 879L811.5 386.2M3715.7 879L814.5 386.3M3753.1 879L817.6 386.4M3790.3 879L820.6 386.4M3827.5 879L823.7 386.5M3864.5 879L826.7 386.6M3901.4 879L829.8 386.6M3938.2 879L832.9 386.7M3974.9 879L835.9 386.8M4011.4 879L839 386.9M4047.9 879L842.1 386.9M4084.2 879L845.1 387M4120.5 879L848.2 387.1M4156.6 879L851.3 387.1M4192.6 879L854.3 387.2M4228.5 879L857.4 387.3M4264.2 879L860.5 387.4M4299.9 879L863.6 387.4M4335.5 879L866.7 387.5M4370.9 879L869.8 387.6M4406.3 879L872.8 387.6M4441.5 879L875.9 387.7M4476.6 879L879 387.8M4511.6 879L882.1 387.9M4546.5 879L885.2 387.9M4581.4 879L888.3 388M4616.1 879L891.4 388.1M4650.7 879L894.5 388.1M4685.1 879L897.6 388.2M4719.5 879L900.7 388.3M4753.8 879L903.8 388.4M4788 879L906.9 388.4M4822.1 879L910 388.5M4856.1 879L913.2 388.6M4889.9 879L916.3 388.6M4923.7 879L919.4 388.7M4957.4 879L922.5 388.8M4990.9 879L925.6 388.9M5024.4 879L928.8 388.9M5057.8 879L931.9 389M5091.1 879L935 389.1M5124.2 879L938.1 389.2M5157.3 879L941.3 389.2M5190.3 879L944.4 389.3M5223.2 879L947.5 389.4M5255.9 879L950.7 389.4M5288.6 879L953.8 389.5M5321.2 879L957 389.6M5353.7 879L960.1 389.7"/></g><path d="M60 565L958 606" stroke="#f01010" stroke-width="3.4" fill="none"/><path d="M60 859.5L392 543" stroke="#0808f2" stroke-width="4" fill="none"/><path d="M392 543L575 370" stroke="#58a8ff" stroke-width="2" fill="none" opacity=".55"/></svg><div class="abs" style="left:-60px;top:-114px;width:0;height:0"><svg style="left:0;top:0" width="1" height="1"><g fill="none" stroke="#2a3f55" stroke-width="1"><path d="M209.7 544.8L208.4 404.8L565.7 421.9"/><path d="M238.5 549.5L237 386L633.5 409.7L634.5 535"/><path d="M237 386L208.4 404.8M633.5 409.7L565.7 421.9"/></g></svg><style>.L{position:absolute;left:0;top:0;width:1000px;height:283.2px;transform-origin:0 0;font-weight:bold;line-height:1}.L span{position:absolute;transform-origin:0 0;display:block;-webkit-background-clip:text;background-clip:text;color:transparent;white-space:pre}.L b{position:absolute;left:0;top:0;width:372px;height:277.9px;overflow:hidden;display:block;font-weight:bold}.L .m{font-family:"DejaVu Sans",sans-serif;font-size:374.4px;top:-43.3px;left:-40.2px;transform:scale(1.1690,1.1)}.L .c1{font-family:"DejaVu Sans",sans-serif;font-size:374.4px;top:-38.9px;left:378.5px;transform:scaleX(1.2576)}.L .c2{font-family:"DejaVu Sans",sans-serif;font-size:374.4px;top:-38.9px;left:693.2px;transform:scaleX(1.2231)}.S .m{background-image:linear-gradient(180deg,#2a2b66 0 52%,#4a4eb4 66% 100%),linear-gradient(#2c2d6c,#2c2d6c),linear-gradient(90deg,#4b4fb2 0 26%,#2c2d6c 26% 50%,#5257c2 50% 100%);background-size:30% 100%,16% 14%,100% 100%;background-position:100% 0,51.2% 74.4%,0 0;background-repeat:no-repeat}.S .c1,.S .c2{background-image:linear-gradient(180deg,transparent 0 14%,#26275e 14% 48%,transparent 48% 100%),linear-gradient(180deg,#5257c2 0,#4a4fb6 45%,#3a3c94 75%,#2e2f78 100%);background-size:70% 100%,100% 100%;background-position:100% 0,0 0;background-repeat:no-repeat}.Fr span{background-image:repeating-linear-gradient(-9deg,#fde51c 0 3px,#e6c822 3.600px 4.600px,#fde51c 5.200px)}</style><div class="L S" style="transform:matrix3d(0.505071,0.127304,0,0.000261178,0.004892,0.495315,0,1.48988e-06,0,0,1,0,208.392,404.766,0,1)"><b><span class="m">M</span></b><span class="c1">C</span><span class="c2">C</span></div><div class="L S" style="transform:matrix3d(0.506468,0.127657,0,0.000261901,0.00490553,0.496685,0,1.494e-06,0,0,1,0,208.865,404.456,0,1)"><b><span class="m">M</span></b><span class="c1">C</span><span class="c2">C</span></div><div class="L S" style="transform:matrix3d(0.507873,0.128011,0,0.000262627,0.00491914,0.498063,0,1.49815e-06,0,0,1,0,209.34,404.144,0,1)"><b><span class="m">M</span></b><span class="c1">C</span><span class="c2">C</span></div><div class="L S" style="transform:matrix3d(0.509286,0.128367,0,0.000263358,0.00493283,0.499449,0,1.50231e-06,0,0,1,0,209.818,403.831,0,1)"><b><span class="m">M</span></b><span class="c1">C</span><span class="c2">C</span></div><div class="L S" style="transform:matrix3d(0.510707,0.128725,0,0.000264093,0.00494659,0.500842,0,1.5065e-06,0,0,1,0,210.298,403.516,0,1)"><b><span class="m">M</span></b><span class="c1">C</span><span class="c2">C</span></div><div class="L S" style="transform:matrix3d(0.512136,0.129085,0,0.000264831,0.00496043,0.502243,0,1.51072e-06,0,0,1,0,210.781,403.199,0,1)"><b><span class="m">M</span></b><span class="c1">C</span><span class="c2">C</span></div><div class="L S" style="transform:matrix3d(0.513573,0.129447,0,0.000265574,0.00497434,0.503652,0,1.51496e-06,0,0,1,0,211.267,402.88,0,1)"><b><span class="m">M</span></b><span class="c1">C</span><span class="c2">C</span></div><div class="L S" style="transform:matrix3d(0.515017,0.129811,0,0.000266322,0.00498834,0.505069,0,1.51922e-06,0,0,1,0,211.756,402.559,0,1)"><b><span class="m">M</span></b><span class="c1">C</span><span class="c2">C</span></div><div class="L S" style="transform:matrix3d(0.51647,0.130178,0,0.000267073,0.00500241,0.506494,0,1.52351e-06,0,0,1,0,212.247,402.237,0,1)"><b><span class="m">M</span></b><span class="c1">C</span><span class="c2">C</span></div><div class="L S" style="transform:matrix3d(0.517932,0.130546,0,0.000267828,0.00501656,0.507927,0,1.52782e-06,0,0,1,0,212.741,401.913,0,1)"><b><span class="m">M</span></b><span class="c1">C</span><span class="c2">C</span></div><div class="L S" style="transform:matrix3d(0.519401,0.130916,0,0.000268588,0.0050308,0.509368,0,1.53215e-06,0,0,1,0,213.238,401.587,0,1)"><b><span class="m">M</span></b><span class="c1">C</span><span class="c2">C</span></div><div class="L S" style="transform:matrix3d(0.520879,0.131289,0,0.000269353,0.00504511,0.510818,0,1.53651e-06,0,0,1,0,213.738,401.259,0,1)"><b><span class="m">M</span></b><span class="c1">C</span><span class="c2">C</span></div><div class="L S" style="transform:matrix3d(0.522365,0.131664,0,0.000270121,0.00505951,0.512275,0,1.54089e-06,0,0,1,0,214.241,400.929,0,1)"><b><span class="m">M</span></b><span class="c1">C</span><span class="c2">C</span></div><div class="L S" style="transform:matrix3d(0.52386,0.13204,0,0.000270894,0.00507399,0.513741,0,1.5453e-06,0,0,1,0,214.746,400.598,0,1)"><b><span class="m">M</span></b><span class="c1">C</span><span class="c2">C</span></div><div class="L S" style="transform:matrix3d(0.525364,0.132419,0,0.000271672,0.00508855,0.515216,0,1.54974e-06,0,0,1,0,215.254,400.264,0,1)"><b><span class="m">M</span></b><span class="c1">C</span><span class="c2">C</span></div><div class="L S" style="transform:matrix3d(0.526876,0.1328,0,0.000272454,0.00510319,0.516698,0,1.5542e-06,0,0,1,0,215.766,399.929,0,1)"><b><span class="m">M</span></b><span class="c1">C</span><span class="c2">C</span></div><div class="L S" style="transform:matrix3d(0.528397,0.133184,0,0.00027324,0.00511792,0.51819,0,1.55869e-06,0,0,1,0,216.28,399.592,0,1)"><b><span class="m">M</span></b><span class="c1">C</span><span class="c2">C</span></div><div class="L S" style="transform:matrix3d(0.529926,0.133569,0,0.000274031,0.00513274,0.51969,0,1.5632e-06,0,0,1,0,216.797,399.252,0,1)"><b><span class="m">M</span></b><span class="c1">C</span><span class="c2">C</span></div><div class="L S" style="transform:matrix3d(0.531465,0.133957,0,0.000274827,0.00514764,0.521199,0,1.56774e-06,0,0,1,0,217.317,398.911,0,1)"><b><span class="m">M</span></b><span class="c1">C</span><span class="c2">C</span></div><div class="L S" style="transform:matrix3d(0.533012,0.134347,0,0.000275627,0.00516263,0.522716,0,1.5723e-06,0,0,1,0,217.841,398.568,0,1)"><b><span class="m">M</span></b><span class="c1">C</span><span class="c2">C</span></div><div class="L S" style="transform:matrix3d(0.534569,0.134739,0,0.000276432,0.0051777,0.524243,0,1.57689e-06,0,0,1,0,218.367,398.223,0,1)"><b><span class="m">M</span></b><span class="c1">C</span><span class="c2">C</span></div><div class="L S" style="transform:matrix3d(0.536134,0.135134,0,0.000277241,0.00519287,0.525778,0,1.58151e-06,0,0,1,0,218.896,397.875,0,1)"><b><span class="m">M</span></b><span class="c1">C</span><span class="c2">C</span></div><div class="L S" style="transform:matrix3d(0.537709,0.135531,0,0.000278056,0.00520812,0.527322,0,1.58616e-06,0,0,1,0,219.429,397.526,0,1)"><b><span class="m">M</span></b><span class="c1">C</span><span class="c2">C</span></div><div class="L S" style="transform:matrix3d(0.539293,0.13593,0,0.000278875,0.00522346,0.528876,0,1.59083e-06,0,0,1,0,219.965,397.175,0,1)"><b><span class="m">M</span></b><span class="c1">C</span><span class="c2">C</span></div><div class="L S" style="transform:matrix3d(0.540886,0.136332,0,0.000279699,0.0052389,0.530438,0,1.59553e-06,0,0,1,0,220.504,396.821,0,1)"><b><span class="m">M</span></b><span class="c1">C</span><span class="c2">C</span></div><div class="L S" style="transform:matrix3d(0.542489,0.136736,0,0.000280528,0.00525442,0.53201,0,1.60026e-06,0,0,1,0,221.046,396.466,0,1)"><b><span class="m">M</span></b><span class="c1">C</span><span class="c2">C</span></div><div class="L S" style="transform:matrix3d(0.544102,0.137142,0,0.000281361,0.00527004,0.533592,0,1.60501e-06,0,0,1,0,221.591,396.108,0,1)"><b><span class="m">M</span></b><span class="c1">C</span><span class="c2">C</span></div><div class="L S" style="transform:matrix3d(0.545724,0.137551,0,0.0002822,0.00528575,0.535182,0,1.6098e-06,0,0,1,0,222.139,395.748,0,1)"><b><span class="m">M</span></b><span class="c1">C</span><span class="c2">C</span></div><div class="L S" style="transform:matrix3d(0.547355,0.137962,0,0.000283044,0.00530156,0.536783,0,1.61461e-06,0,0,1,0,222.691,395.386,0,1)"><b><span class="m">M</span></b><span class="c1">C</span><span class="c2">C</span></div><div class="L S" style="transform:matrix3d(0.548997,0.138376,0,0.000283893,0.00531745,0.538392,0,1.61945e-06,0,0,1,0,223.246,395.022,0,1)"><b><span class="m">M</span></b><span class="c1">C</span><span class="c2">C</span></div><div class="L S" style="transform:matrix3d(0.550648,0.138792,0,0.000284747,0.00533345,0.540012,0,1.62432e-06,0,0,1,0,223.805,394.656,0,1)"><b><span class="m">M</span></b><span class="c1">C</span><span class="c2">C</span></div><div class="L S" style="transform:matrix3d(0.55231,0.139211,0,0.000285606,0.00534954,0.541641,0,1.62923e-06,0,0,1,0,224.366,394.287,0,1)"><b><span class="m">M</span></b><span class="c1">C</span><span class="c2">C</span></div><div class="L S" style="transform:matrix3d(0.553981,0.139632,0,0.00028647,0.00536573,0.54328,0,1.63416e-06,0,0,1,0,224.932,393.917,0,1)"><b><span class="m">M</span></b><span class="c1">C</span><span class="c2">C</span></div><div class="L S" style="transform:matrix3d(0.555663,0.140056,0,0.00028734,0.00538202,0.544929,0,1.63912e-06,0,0,1,0,225.5,393.544,0,1)"><b><span class="m">M</span></b><span class="c1">C</span><span class="c2">C</span></div><div class="L S" style="transform:matrix3d(0.557354,0.140483,0,0.000288214,0.0053984,0.546588,0,1.64411e-06,0,0,1,0,226.072,393.168,0,1)"><b><span class="m">M</span></b><span class="c1">C</span><span class="c2">C</span></div><div class="L S" style="transform:matrix3d(0.559056,0.140912,0,0.000289095,0.00541489,0.548258,0,1.64913e-06,0,0,1,0,226.648,392.791,0,1)"><b><span class="m">M</span></b><span class="c1">C</span><span class="c2">C</span></div><div class="L S" style="transform:matrix3d(0.560769,0.141343,0,0.00028998,0.00543148,0.549937,0,1.65418e-06,0,0,1,0,227.227,392.411,0,1)"><b><span class="m">M</span></b><span class="c1">C</span><span class="c2">C</span></div><div class="L S" style="transform:matrix3d(0.562492,0.141778,0,0.000290871,0.00544817,0.551627,0,1.65926e-06,0,0,1,0,227.81,392.029,0,1)"><b><span class="m">M</span></b><span class="c1">C</span><span class="c2">C</span></div><div class="L S" style="transform:matrix3d(0.564226,0.142215,0,0.000291768,0.00546496,0.553327,0,1.66438e-06,0,0,1,0,228.396,391.644,0,1)"><b><span class="m">M</span></b><span class="c1">C</span><span class="c2">C</span></div><div class="L S" style="transform:matrix3d(0.56597,0.142654,0,0.00029267,0.00548185,0.555038,0,1.66952e-06,0,0,1,0,228.986,391.257,0,1)"><b><span class="m">M</span></b><span class="c1">C</span><span class="c2">C</span></div><div class="L S" style="transform:matrix3d(0.567725,0.143097,0,0.000293577,0.00549885,0.556759,0,1.6747e-06,0,0,1,0,229.579,390.868,0,1)"><b><span class="m">M</span></b><span class="c1">C</span><span class="c2">C</span></div><div class="L S" style="transform:matrix3d(0.569492,0.143542,0,0.000294491,0.00551596,0.558491,0,1.67991e-06,0,0,1,0,230.176,390.476,0,1)"><b><span class="m">M</span></b><span class="c1">C</span><span class="c2">C</span></div><div class="L S" style="transform:matrix3d(0.571269,0.14399,0,0.00029541,0.00553317,0.560234,0,1.68515e-06,0,0,1,0,230.777,390.082,0,1)"><b><span class="m">M</span></b><span class="c1">C</span><span class="c2">C</span></div><div class="L S" style="transform:matrix3d(0.573057,0.144441,0,0.000296334,0.0055505,0.561988,0,1.69043e-06,0,0,1,0,231.382,389.685,0,1)"><b><span class="m">M</span></b><span class="c1">C</span><span class="c2">C</span></div><div class="L S" style="transform:matrix3d(0.574857,0.144894,0,0.000297265,0.00556793,0.563752,0,1.69574e-06,0,0,1,0,231.991,389.286,0,1)"><b><span class="m">M</span></b><span class="c1">C</span><span class="c2">C</span></div><div class="L S" style="transform:matrix3d(0.576667,0.145351,0,0.000298201,0.00558546,0.565528,0,1.70108e-06,0,0,1,0,232.603,388.884,0,1)"><b><span class="m">M</span></b><span class="c1">C</span><span class="c2">C</span></div><div class="L S" style="transform:matrix3d(0.57849,0.14581,0,0.000299144,0.00560312,0.567315,0,1.70645e-06,0,0,1,0,233.219,388.48,0,1)"><b><span class="m">M</span></b><span class="c1">C</span><span class="c2">C</span></div><div class="L S" style="transform:matrix3d(0.580324,0.146272,0,0.000300092,0.00562088,0.569114,0,1.71186e-06,0,0,1,0,233.839,388.073,0,1)"><b><span class="m">M</span></b><span class="c1">C</span><span class="c2">C</span></div><div class="L S" style="transform:matrix3d(0.582169,0.146737,0,0.000301046,0.00563875,0.570924,0,1.71731e-06,0,0,1,0,234.463,387.664,0,1)"><b><span class="m">M</span></b><span class="c1">C</span><span class="c2">C</span></div><div class="L S" style="transform:matrix3d(0.584026,0.147205,0,0.000302007,0.00565674,0.572745,0,1.72278e-06,0,0,1,0,235.092,387.252,0,1)"><b><span class="m">M</span></b><span class="c1">C</span><span class="c2">C</span></div><div class="L S" style="transform:matrix3d(0.585896,0.147677,0,0.000302973,0.00567485,0.574578,0,1.7283e-06,0,0,1,0,235.724,386.837,0,1)"><b><span class="m">M</span></b><span class="c1">C</span><span class="c2">C</span></div><div class="L S" style="transform:matrix3d(0.587777,0.148151,0,0.000303946,0.00569307,0.576423,0,1.73385e-06,0,0,1,0,236.36,386.42,0,1)"><b><span class="m">M</span></b><span class="c1">C</span><span class="c2">C</span></div><svg style="left:0;top:0" width="1" height="1"><path d="M482.500 449L529 442.500 521.600 462.500 497 477 486.500 502 482 484 481 466z" fill="#23244f"/><path d="M404 432l9-2.500 2 30-3 80-8 5z" fill="#2a2b66" opacity=".8"/></svg><div class="L Fr" style="transform:matrix3d(0.58967,0.148628,0,0.000304925,0.00571141,0.57828,0,1.73943e-06,0,0,1,0,237,386,0,1)"><b><span class="m">M</span></b><span class="c1">C</span><span class="c2">C</span></div></div><svg style="left:437.500px;top:3.700px" width="23" height="23" viewBox="0 0 22 22"><circle cx="11" cy="11" r="10.600" fill="#f4f4f4"/><circle cx="11" cy="11" r="2.600" fill="#333"/><path d="M11 5.500v1.800M11 14.700v1.800M5.500 11h1.800M14.700 11h1.800M7.100 7.100l1.300 1.300M14.900 7.100l-1.300 1.300M7.100 14.900l1.300-1.300" stroke="#555" stroke-width="1.200"/><path d="M13.300 13.300l3 3M16.500 13.800v2.700h-2.700" stroke="#333" stroke-width="1.300" fill="none"/></svg><svg style="left:24.500px;top:634.500px" width="18" height="18" viewBox="0 0 18 18"><circle cx="9" cy="9" r="7.600" fill="#181818" stroke="#f0f0f0" stroke-width="1.600"/><ellipse cx="9" cy="9" rx="3" ry="7.600" fill="none" stroke="#f0f0f0" stroke-width="1.300"/><path d="M1.500 9h15M3 5c3.500 1.500 8.500 1.500 12 0" stroke="#f0f0f0" stroke-width="1.300" fill="none"/></svg><svg style="left:48px;top:635px" width="17" height="17" viewBox="0 0 17 17"><path d="M8.5 0.5L10.8 3.0L9.6 3.0L9.6 7.4L14.0 7.4L14.0 6.2L16.5 8.5L14.0 10.8L14.0 9.6L9.6 9.6L9.6 14.0L10.8 14.0L8.5 16.5L6.2 14.0L7.4 14.0L7.4 9.6L3.0 9.6L3.0 10.8L0.5 8.5L3.0 6.2L3.0 7.4L7.4 7.4L7.4 3.0L6.2 3.0z" fill="#181818" stroke="#f0f0f0" stroke-width=".9"/></svg><svg style="left:74px;top:632.500px" width="14" height="20" viewBox="0 0 14 20"><path d="M7 1l3.800 3.200-1.600.6v7.400c1.200 0 3.300.2 4 1.200L7 19 .8 13.400c.7-1 2.800-1.200 4-1.200V4.800l-1.600-.6z" fill="#0c0c0c" stroke="#f0f0f0" stroke-width="1.300" stroke-linejoin="round"/></svg><svg style="left:36px;top:652px" width="56" height="56" viewBox="96 766 56 56"><path d="M107 812V778" stroke="#3f9a4e" stroke-width="1.100" opacity=".85"/><path d="M107 772l2.400 6.500h-4.800z" fill="#6fd07f"/><path d="M110 811.500L138 810.600" stroke="#a04848" stroke-width="1" opacity=".8"/><ellipse cx="141" cy="810.500" rx="3" ry="1.600" fill="#b84a5a"/><circle cx="103.500" cy="815" r="2.200" fill="#5a8ad8"/></svg></div><div id="canvasborder" class="abs"></div><div class="abs" style="left:958px;top:114px;width:15px;height:778px;background:#4d4d4d"></div><div class="abs" style="left:973px;top:96px;width:2px;height:796px;background:#4a4a4a"></div><div id="status" class="abs"><div class="abs" style="left:0;top:1px;width:48px;height:17px;background:#4c4c4c"></div><div class="abs" style="left:49px;top:1px;width:184px;height:17px;background:#535353"></div><div class="t" style="left:4px;top:1px;font-size:12.5px;color:#e4e4e4">82.64%</div><div class="t" style="left:82px;top:1px;font-size:12.5px;color:#dadada">文档:1.29M/1.06M</div><svg style="left:221px;top:5px" width="6" height="9" viewBox="0 0 6 9"><path d="M1 .8l3.8 3.7L1 8.2" stroke="#d0d0d0" stroke-width="1.3" fill="none"/></svg><div class="abs" style="left:233px;top:1px;width:683px;height:17px;background:#4c4c4c"></div></div><div class="ln" style="left:42px;top:892px;width:933px;height:1px;background:#383838"></div><div id="timeline" class="abs"><div class="abs" style="left:0;top:2px;width:58px;height:26px;background:#535353"></div><div class="t" style="left:9px;top:7px;font-size:13px;color:#e4e4e4">时间轴</div><svg style="left:915px;top:11px" width="10" height="8" viewBox="0 0 10 8"><path d="M0 .8h10M0 3.3h10M0 5.800h10M0 8h10" stroke="#b8b8b8" stroke-width="1"/></svg></div>
<div id="rgap" class="abs"></div><svg style="left:1001px;top:70px" width="9" height="6" viewBox="0 0 9 6"><path d="M3.400 0L0 3l3.400 3zM8 0L4.600 3 8 6z" fill="#cfcfcf"/></svg><svg style="left:1256px;top:70px" width="5" height="6" viewBox="0 0 5 6"><path d="M1 0l3.400 3L1 6z" fill="#cfcfcf"/></svg><div id="iconcol" class="abs"><div class="abs" style="left:0;top:40px;width:37px;height:2px;background:#424242"></div><div class="abs" style="left:0;top:108px;width:37px;height:2px;background:#424242"></div><div class="abs" style="left:0;top:150px;width:37px;height:2px;background:#424242"></div><div class="abs" style="left:0;top:218px;width:37px;height:2px;background:#424242"></div><div class="abs" style="left:0;top:259px;width:37px;height:2px;background:#424242"></div><div class="abs" style="left:0;top:300px;width:37px;height:2px;background:#424242"></div><div class="abs" style="left:9px;top:3px;width:18px;height:4px;background:repeating-linear-gradient(90deg,#6a6a6a 0 1px,#4c4c4c 1px 2px)"></div><div class="abs" style="left:9px;top:45px;width:18px;height:4px;background:repeating-linear-gradient(90deg,#6a6a6a 0 1px,#4c4c4c 1px 2px)"></div><div class="abs" style="left:9px;top:113px;width:18px;height:4px;background:repeating-linear-gradient(90deg,#6a6a6a 0 1px,#4c4c4c 1px 2px)"></div><div class="abs" style="left:9px;top:155px;width:18px;height:4px;background:repeating-linear-gradient(90deg,#6a6a6a 0 1px,#4c4c4c 1px 2px)"></div><div class="abs" style="left:9px;top:223px;width:18px;height:4px;background:repeating-linear-gradient(90deg,#6a6a6a 0 1px,#4c4c4c 1px 2px)"></div><div class="abs" style="left:9px;top:264px;width:18px;height:4px;background:repeating-linear-gradient(90deg,#6a6a6a 0 1px,#4c4c4c 1px 2px)"></div><svg style="left:0;top:0" width="37" height="320" viewBox="976 80 37 320">
<g fill="#dcdcdc">
<rect x="987.500" y="94.500" width="4" height="4" fill="none" stroke="#dcdcdc" stroke-width="1"/><rect x="987.500" y="100.500" width="4" height="4" fill="none" stroke="#dcdcdc" stroke-width="1"/><rect x="987" y="106" width="5" height="5"/>
<path d="M995.500 97.500c4.500-.5 6.500 5 2.500 11l-1.300-.8c3-5 1.700-8.500-1.200-8.200zM996.800 94.500l-3.300 3.300 4.300 1.500z"/>
<path d="M986 137h2v1.500h-2zM989 137h3v1.500h-3zM986 140h2v1.500h-2zM989 140h3v1.500h-3zM986 143h2v1.500h-2zM989 143h3v1.500h-3z"/>
<path d="M1003 136l1.500 1.500-6.500 8-2-1.500zM995.500 145.500l2 1.500c-1 2.500-3 4-5.500 4 1.500-1.500 2-3.500 3.500-5.500z"/>
<path d="M985.500 167h16v2h-16zM985.500 175.500h16v2h-16z"/><path d="M986 164.500c3-1 5 0 5 3.500s-2 4.500-5 3.500zM1003 173c-3-1-6.500 0-6.500 3.500s3.500 5 6.500 3.500z"/>
<path d="M986 204h2v1.500h-2zM989 204h3v1.500h-3zM986 207h2v1.500h-2zM989 207h3v1.500h-3zM986 210h2v1.500h-2zM989 210h3v1.500h-3z"/>
<path d="M996 205.500a2.800 2.800 0 1 1 5.600 0c0 1.500-1 2-1 3.500h4v3h-11.600v-3h4c0-1.500-1-2-1-3.500zM993 213.500h11.600v1.800H993z"/>
<path d="M994.500 246.500l-5.500 14.500h2l1.500-4h6l1.500 4h2l-5.500-14.500zM995.500 249l2.300 6.200h-4.600z"/><rect x="1003.500" y="245" width="1.400" height="17.500"/>
<path d="M993.500 272.500h10v1.800h-2v16h-1.800v-16h-2v16h-1.800v-8.500c-3.500 0-5.500-2-5.500-4.700s2-4.600 3.100-4.600z"/>
<path d="M987.500 329.500l6.500-6.500 1.800 1.800-6.500 6.500c-1.300 1.200-3-.6-1.800-1.800z"/><path d="M993.500 322.500c-1.500-3.500 1-6.500 4.500-6l-2.200 2.500.8 2 2 .6 2.300-2.300c.8 3.300-2.500 6-5.600 4.800z"/>
<path d="M1002.500 331.500l-3.500-.8-6.500-7 1.600-1.500 6.800 6.600zM993 323l-2.800-.8-2.200-3.400 1.300-1.300 3.400 2.200.9 2.700z"/>
</g>

<g fill="none" stroke="#dcdcdc" stroke-width="2"><path d="M989.500 371a5 5 0 0 1-.5-9.800c1.200-4 7-5 9.500-1.400 4-.6 6.800 2.600 6.200 6-.5 3.200-3 5.200-5.700 5.200z"/><path d="M991.800 367.800a3.400 3.400 0 1 1 5.600-3.600l2.200 3.400M997.200 362.500a3.300 3.300 0 1 1 2.300 5.600"/></g>
</svg></div><div id="props" class="abs"><div class="ptabbar"></div><div class="ptab on" style="left:0;width:46px">属性</div><svg style="left:238px;top:10px" width="8" height="8" viewBox="0 0 8 8"><path d="M0 .8h8M0 3.300h8M0 5.800h8M0 8h8" stroke="#c8c8c8" stroke-width="1"/></svg><div class="abs" style="left:11px;top:33px;width:23px;height:24px;background:#383838;border-radius:2px"></div><svg style="left:15px;top:40px" width="15" height="10" viewBox="0 0 15 10"><rect x="0" y=".5" width="10" height="9" rx="1" fill="#e4e4e4"/><path d="M10 5l4.500-3.800v7.600z" fill="#e4e4e4"/></svg><svg style="left:40px;top:37px" width="14" height="15" viewBox="0 0 14 15"><path d="M7 1v5M7 6l-5 3.500M7 6l5 3.500" stroke="#dcdcdc" stroke-width="1" fill="none"/><path d="M7 4l3.500 2v4L7 12l-3.500-2V6z" fill="none" stroke="#dcdcdc" stroke-width="1.100"/><path d="M7 0l1.300 2H5.700zM.8 10.500l2.200-.3-1 1.800zM13.200 10.500l-2.200-.3 1 1.800z" fill="#dcdcdc"/></svg><div class="t" style="left:63px;top:37px;font-size:13px;color:#e2e2e2;letter-spacing:.3px"><span style="color:#a9bdd6">3D</span> 相机</div><div class="ln" style="left:0;top:60px;width:245px;height:1px;background:#484848"></div><div class="t" style="left:6px;top:65px;font-size:13px;color:#e0e0e0">视图:</div><div class="inp" style="left:49px;top:64px;width:188px;height:20px"></div><div class="t" style="left:59px;top:65px;font-size:13px;color:#f0f0f0;letter-spacing:.3px">自定视图 2</div><svg style="left:224px;top:71px" width="9" height="5.4" viewBox="0 0 10 6"><path d="M1 1l4 4 4-4" stroke="#d0d0d0" stroke-width="1.4" fill="none"/></svg><div class="ln" style="left:0;top:88px;width:245px;height:1px;background:#484848"></div><div class="abs" style="left:59px;top:93px;width:22px;height:22px;background:#383838;border-radius:2px"></div><svg style="left:63px;top:96px" width="14" height="15" viewBox="0 0 14 15"><path d="M7 1l6 2.500v8L7 14 1 11.500v-8z" fill="none" stroke="#dcdcdc" stroke-width="1.100"/><path d="M1 3.500L7 6l6-2.500M7 6v8" fill="none" stroke="#dcdcdc" stroke-width="1.100"/></svg><div class="t" style="left:87px;top:95px;font-size:13px;color:#e6e6e6;letter-spacing:.5px">透视</div><svg style="left:126px;top:96px" width="14" height="15" viewBox="0 0 14 15"><path d="M7 1l6 2.500v8L7 14 1 11.500v-8z" fill="#9a9a9a" stroke="#dcdcdc" stroke-width="1.100"/><path d="M1 3.500L7 6l6-2.500M7 6v8" fill="none" stroke="#dcdcdc" stroke-width="1.100"/></svg><div class="t" style="left:151px;top:95px;font-size:13px;color:#e6e6e6;letter-spacing:.5px">正交</div><div class="t" style="left:6px;top:122px;font-size:13px;color:#e0e0e0">视角:</div><div class="inp" style="left:44px;top:121px;width:66px;height:20px"></div><div class="ln" style="left:94px;top:122px;width:1px;height:18px;background:#666"></div><div class="t" style="left:48px;top:122px;font-size:13px;color:#f0f0f0">35</div><svg style="left:98px;top:128px" width="8" height="4.8" viewBox="0 0 10 6"><path d="M1 1l4 4 4-4" stroke="#d0d0d0" stroke-width="1.4" fill="none"/></svg><div class="inp" style="left:119px;top:121px;width:118px;height:20px"></div><div class="t" style="left:129px;top:122px;font-size:13px;color:#f0f0f0;letter-spacing:.3px">毫米镜头</div><svg style="left:224px;top:128px" width="9" height="5.4" viewBox="0 0 10 6"><path d="M1 1l4 4 4-4" stroke="#d0d0d0" stroke-width="1.4" fill="none"/></svg><div class="ln" style="left:0;top:145px;width:245px;height:1px;background:#484848"></div><div class="t" style="left:6px;top:148px;font-size:13px;color:#e0e0e0">景深</div><div class="t" style="left:6px;top:170px;font-size:13px;color:#e0e0e0">距离:</div><div class="inp" style="left:42px;top:169px;width:58px;height:20px"></div><div class="ln" style="left:85px;top:170px;width:1px;height:18px;background:#666"></div><div class="t" style="left:46px;top:170px;font-size:13px;color:#f0f0f0">0.5</div><svg style="left:89px;top:176px" width="8" height="4.8" viewBox="0 0 10 6"><path d="M1 1l4 4 4-4" stroke="#d0d0d0" stroke-width="1.4" fill="none"/></svg><div class="t" style="left:145px;top:170px;font-size:13px;color:#e0e0e0">深度:</div><div class="inp" style="left:177px;top:169px;width:60px;height:20px"></div><div class="ln" style="left:220px;top:170px;width:1px;height:18px;background:#666"></div><div class="t" style="left:181px;top:170px;font-size:13px;color:#f0f0f0">0</div><svg style="left:225px;top:176px" width="8" height="4.8" viewBox="0 0 10 6"><path d="M1 1l4 4 4-4" stroke="#d0d0d0" stroke-width="1.4" fill="none"/></svg><div class="ln" style="left:0;top:192px;width:245px;height:1px;background:#484848"></div><div class="abs" style="left:5px;top:198px;width:12px;height:12px;border:1px solid #8a8a8a;border-radius:2px;background:#4c4c4c"></div><div class="t" style="left:25px;top:196px;font-size:13px;color:#e6e6e6;letter-spacing:.5px">立体</div><div class="t" style="left:6px;top:218px;font-size:13px;color:#787878;letter-spacing:.4px">立体视图:</div><div class="inp" style="left:71px;top:216px;width:73px;height:20px;border-color:#5e5e5e;background:#505050"></div><svg style="left:133px;top:224px" width="8" height="4.8" viewBox="0 0 10 6"><path d="M1 1l4 4 4-4" stroke="#666" stroke-width="1.4" fill="none"/></svg><div class="abs" style="left:240px;top:62px;width:5px;height:334px;background:#4b4b4b"></div><div class="ln" style="left:0;top:396px;width:245px;height:1px;background:#484848"></div><svg style="left:184px;top:402px" width="13" height="12" viewBox="0 0 13 12"><rect x=".6" y=".6" width="11.800" height="10.800" fill="none" stroke="#dcdcdc" stroke-width="1.200"/><rect x=".6" y=".6" width="11.800" height="2.500" fill="#dcdcdc"/><path d="M6.500 4.500l3 1.300v3L6.500 10l-3-1.200v-3z" fill="#dcdcdc"/></svg><svg style="left:214px;top:402px" width="11" height="13" viewBox="0 0 11 13"><path d="M.5 2.500h10M3.500 2.500V.8h4v1.700" stroke="#8c8c8c" stroke-width="1.200" fill="none"/><path d="M1.500 4h8v8.500h-8z" fill="none" stroke="#8c8c8c" stroke-width="1.200"/><path d="M4 5.500v5.500M5.500 5.500v5.500M7 5.500v5.500" stroke="#8c8c8c" stroke-width=".9"/></svg></div><div id="lay" class="abs"><div class="ptabbar"></div><div class="ptab" style="left:0;width:47px;top:-1px;height:28px">图层</div><div class="ptab" style="left:47px;width:46px;top:-1px;height:28px">通道</div><div class="ptab on" style="left:93px;width:36px;color:#d6e0ee;top:-1px;height:28px">3D</div><svg style="left:238px;top:10px" width="8" height="8" viewBox="0 0 8 8"><path d="M0 .8h8M0 3.300h8M0 5.800h8M0 8h8" stroke="#c8c8c8" stroke-width="1"/></svg><div class="abs" style="left:80px;top:34px;width:21px;height:22px;background:#383838;border-radius:2px"></div><svg style="left:84px;top:39px" width="13" height="13" viewBox="0 0 13 13"><path d="M2 2.500v8.500h5M2 6.500h4M3 2h5" stroke="#e4e4e4" stroke-width="1.100" fill="none"/><rect x=".5" y=".5" width="3" height="3" fill="#383838" stroke="#e4e4e4" stroke-width="1"/><path d="M8 2h4.500M6.500 6.500h6M8 11h4.500" stroke="#e4e4e4" stroke-width="1.100"/><circle cx="8.500" cy="2" r="1.400" fill="#e4e4e4"/><circle cx="6.500" cy="6.500" r="1.400" fill="#e4e4e4"/><circle cx="8.500" cy="11" r="1.400" fill="#e4e4e4"/></svg><svg style="left:110px;top:40px" width="10" height="12" viewBox="0 0 10 12"><path d="M1 3.500h8v6.500c0 1-8 1-8 0z" fill="#dcdcdc"/><path d="M1 3.500l1.500-2.500h5L9 3.500" fill="none" stroke="#dcdcdc" stroke-width="1.100"/><path d="M3 5v5M5 5v5M7 5v5" stroke="#535353" stroke-width=".8"/></svg><svg style="left:133px;top:40px" width="11" height="12" viewBox="0 0 11 12"><path d="M1 2.500c2 1.500 6 1.500 8 0v7c-2 2-6 2-8 0z" fill="none" stroke="#d8d8d8" stroke-width="1.100"/><path d="M1.500 4h7v5.500c-2 1.500-5 1.500-7 0z" fill="#d8d8d8" opacity=".75"/><path d="M1 2.500l-.5-2M9 2.500l1.500 1.500v4L9 9" stroke="#d8d8d8" stroke-width="1" fill="none"/></svg><svg style="left:158px;top:39px" width="10" height="13" viewBox="0 0 10 13"><path d="M5 .5a4.300 4.300 0 0 1 2.500 7.800v1.700h-5V8.300A4.300 4.300 0 0 1 5 .5z" fill="#dcdcdc"/><path d="M3 11.200h4M3.500 12.600h3" stroke="#dcdcdc" stroke-width="1"/></svg><div class="row" style="top:62px"><svg style="left:4px;top:5px" width="14" height="9" viewBox="0 0 14 9"><path d="M.5 4.500C3 .8 11 .8 13.500 4.500 11 8.200 3 8.200 .5 4.500z" fill="#8a8a8a"/><circle cx="7" cy="4.500" r="2.300" fill="#535353"/><circle cx="7" cy="4.500" r="1.100" fill="#8a8a8a"/></svg><svg style="left:25px;top:3px" width="13" height="14" viewBox="0 0 13 14"><circle cx="6.500" cy="5" r="1.800" fill="#dcdcdc"/><path d="M6.500 .5v1.700M2.500 2l1.300 1.300M10.500 2L9.200 3.300M1 5.500h2M10 5.500h2" stroke="#dcdcdc" stroke-width="1"/><path d="M1 10l5.500-2.500L12 10l-5.500 3z" fill="#dcdcdc"/></svg><div class="t" style="left:47px;top:2px;letter-spacing:.45px">环境</div></div><div class="row" style="top:82px"><svg style="left:4px;top:5px" width="14" height="9" viewBox="0 0 14 9"><path d="M.5 4.500C3 .8 11 .8 13.500 4.500 11 8.200 3 8.200 .5 4.500z" fill="#8a8a8a"/><circle cx="7" cy="4.500" r="2.300" fill="#535353"/><circle cx="7" cy="4.500" r="1.100" fill="#8a8a8a"/></svg><svg style="left:25px;top:4px" width="13" height="13" viewBox="0 0 13 13"><path d="M2 2.500v8.500h5M2 6.500h4M3 2h5" stroke="#dcdcdc" stroke-width="1.100" fill="none"/><rect x=".5" y=".5" width="3" height="3" fill="#383838" stroke="#dcdcdc" stroke-width="1"/><path d="M8 2h4.500M6.500 6.500h6M8 11h4.500" stroke="#dcdcdc" stroke-width="1.100"/><circle cx="8.500" cy="2" r="1.400" fill="#dcdcdc"/><circle cx="6.500" cy="6.500" r="1.400" fill="#dcdcdc"/><circle cx="8.500" cy="11" r="1.400" fill="#dcdcdc"/></svg><div class="t" style="left:47px;top:2px;letter-spacing:.45px">场景</div></div><div class="row" style="top:102px"><div class="abs" style="left:54px;top:0;width:186px;height:18px;background:#686868"></div><svg style="left:4px;top:5px" width="14" height="9" viewBox="0 0 14 9"><path d="M.5 4.500C3 .8 11 .8 13.500 4.500 11 8.200 3 8.200 .5 4.500z" fill="#8a8a8a"/><circle cx="7" cy="4.500" r="2.300" fill="#535353"/><circle cx="7" cy="4.500" r="1.100" fill="#8a8a8a"/></svg><svg style="left:41px;top:5px" width="15" height="10" viewBox="0 0 15 10"><rect x="0" y=".5" width="10" height="9" rx="1" fill="#e4e4e4"/><path d="M10 5l4.500-3.800v7.600z" fill="#e4e4e4"/></svg><div class="t" style="left:63px;top:2px;letter-spacing:.45px">当前视图</div></div><div class="row" style="top:122px"><svg style="left:4px;top:5px" width="14" height="9" viewBox="0 0 14 9"><path d="M.5 4.500C3 .8 11 .8 13.500 4.500 11 8.200 3 8.200 .5 4.500z" fill="#e8e8e8"/><circle cx="7" cy="4.500" r="2.300" fill="#535353"/><circle cx="7" cy="4.500" r="1.100" fill="#e8e8e8"/></svg><svg style="left:42px;top:3px" width="14" height="14" viewBox="0 0 14 14"><circle cx="6" cy="6" r="2.600" fill="#dcdcdc"/><path d="M6 0v2M6 10v2M0 6h2M10 6h2M1.800 1.800l1.400 1.400M8.800 8.800l1.400 1.400M10.200 1.800L8.800 3.200M3.200 8.800L1.800 10.200" stroke="#dcdcdc" stroke-width="1.100"/><path d="M10 10l3.500 3.500" stroke="#dcdcdc" stroke-width="1.200"/></svg><div class="t" style="left:63px;top:2px;letter-spacing:.45px">无限光 1</div></div><div class="row" style="top:142px"><svg style="left:4px;top:5px" width="14" height="9" viewBox="0 0 14 9"><path d="M.5 4.500C3 .8 11 .8 13.500 4.500 11 8.200 3 8.200 .5 4.500z" fill="#e8e8e8"/><circle cx="7" cy="4.500" r="2.300" fill="#535353"/><circle cx="7" cy="4.500" r="1.100" fill="#e8e8e8"/></svg><svg style="left:28px;top:7px" width="8" height="4.8" viewBox="0 0 10 6"><path d="M1 1l4 4 4-4" stroke="#bdbdbd" stroke-width="1.4" fill="none"/></svg><svg style="left:42px;top:3px" width="13" height="13" viewBox="0 0 13 13"><path d="M6.500 0l1.800 3.800 4.200-.8-2.500 3.500 2.500 3.500-4.200-.8L6.500 13 4.700 9.200.5 10 3 6.500.5 3l4.200.8z" fill="#dcdcdc"/><path d="M6.500 3v7M3.500 5l6 3M9.500 5l-6 3" stroke="#535353" stroke-width=".7"/></svg><div class="t" style="left:62px;top:2px;letter-spacing:.45px"><i>MCC</i></div></div><div class="row" style="top:162px"><svg style="left:4px;top:5px" width="14" height="9" viewBox="0 0 14 9"><path d="M.5 4.500C3 .8 11 .8 13.500 4.500 11 8.200 3 8.200 .5 4.500z" fill="#e8e8e8"/><circle cx="7" cy="4.500" r="2.300" fill="#535353"/><circle cx="7" cy="4.500" r="1.100" fill="#e8e8e8"/></svg><svg style="left:58px;top:4px" width="11" height="12" viewBox="0 0 11 12"><path d="M1 2.500c2 1.500 6 1.500 8 0v7c-2 2-6 2-8 0z" fill="none" stroke="#d8d8d8" stroke-width="1.100"/><path d="M1.500 4h7v5.500c-2 1.500-5 1.500-7 0z" fill="#d8d8d8" opacity=".75"/><path d="M1 2.500l-.5-2M9 2.500l1.500 1.500v4L9 9" stroke="#d8d8d8" stroke-width="1" fill="none"/></svg><div class="t" style="left:78px;top:2px;letter-spacing:.45px"><i>MCC</i> 前膨胀材质</div></div><div class="row" style="top:182px"><svg style="left:4px;top:5px" width="14" height="9" viewBox="0 0 14 9"><path d="M.5 4.500C3 .8 11 .8 13.500 4.500 11 8.200 3 8.200 .5 4.500z" fill="#e8e8e8"/><circle cx="7" cy="4.500" r="2.300" fill="#535353"/><circle cx="7" cy="4.500" r="1.100" fill="#e8e8e8"/></svg><svg style="left:58px;top:4px" width="11" height="12" viewBox="0 0 11 12"><path d="M1 2.500c2 1.500 6 1.500 8 0v7c-2 2-6 2-8 0z" fill="none" stroke="#d8d8d8" stroke-width="1.100"/><path d="M1.500 4h7v5.500c-2 1.500-5 1.500-7 0z" fill="#d8d8d8" opacity=".75"/><path d="M1 2.500l-.5-2M9 2.500l1.500 1.500v4L9 9" stroke="#d8d8d8" stroke-width="1" fill="none"/></svg><div class="t" style="left:78px;top:2px;letter-spacing:.45px"><i>MCC</i> 前斜面材质</div></div><div class="row" style="top:202px"><svg style="left:4px;top:5px" width="14" height="9" viewBox="0 0 14 9"><path d="M.5 4.500C3 .8 11 .8 13.500 4.500 11 8.200 3 8.200 .5 4.500z" fill="#e8e8e8"/><circle cx="7" cy="4.500" r="2.300" fill="#535353"/><circle cx="7" cy="4.500" r="1.100" fill="#e8e8e8"/></svg><svg style="left:58px;top:4px" width="11" height="12" viewBox="0 0 11 12"><path d="M1 2.500c2 1.500 6 1.500 8 0v7c-2 2-6 2-8 0z" fill="none" stroke="#d8d8d8" stroke-width="1.100"/><path d="M1.500 4h7v5.500c-2 1.500-5 1.500-7 0z" fill="#d8d8d8" opacity=".75"/><path d="M1 2.500l-.5-2M9 2.500l1.500 1.500v4L9 9" stroke="#d8d8d8" stroke-width="1" fill="none"/></svg><div class="t" style="left:78px;top:2px;letter-spacing:.45px"><i>MCC</i> 凸出材质</div></div><div class="row" style="top:222px"><svg style="left:4px;top:5px" width="14" height="9" viewBox="0 0 14 9"><path d="M.5 4.500C3 .8 11 .8 13.500 4.500 11 8.200 3 8.200 .5 4.500z" fill="#e8e8e8"/><circle cx="7" cy="4.500" r="2.300" fill="#535353"/><circle cx="7" cy="4.500" r="1.100" fill="#e8e8e8"/></svg><svg style="left:58px;top:4px" width="11" height="12" viewBox="0 0 11 12"><path d="M1 2.500c2 1.500 6 1.500 8 0v7c-2 2-6 2-8 0z" fill="none" stroke="#d8d8d8" stroke-width="1.100"/><path d="M1.500 4h7v5.500c-2 1.500-5 1.500-7 0z" fill="#d8d8d8" opacity=".75"/><path d="M1 2.500l-.5-2M9 2.500l1.500 1.500v4L9 9" stroke="#d8d8d8" stroke-width="1" fill="none"/></svg><div class="t" style="left:78px;top:2px;letter-spacing:.45px"><i>MCC</i> 后斜面材质</div></div><div class="row" style="top:242px"><svg style="left:4px;top:5px" width="14" height="9" viewBox="0 0 14 9"><path d="M.5 4.500C3 .8 11 .8 13.500 4.500 11 8.200 3 8.200 .5 4.500z" fill="#e8e8e8"/><circle cx="7" cy="4.500" r="2.300" fill="#535353"/><circle cx="7" cy="4.500" r="1.100" fill="#e8e8e8"/></svg><svg style="left:58px;top:4px" width="11" height="12" viewBox="0 0 11 12"><path d="M1 2.500c2 1.500 6 1.500 8 0v7c-2 2-6 2-8 0z" fill="none" stroke="#d8d8d8" stroke-width="1.100"/><path d="M1.500 4h7v5.500c-2 1.500-5 1.500-7 0z" fill="#d8d8d8" opacity=".75"/><path d="M1 2.500l-.5-2M9 2.500l1.500 1.500v4L9 9" stroke="#d8d8d8" stroke-width="1" fill="none"/></svg><div class="t" style="left:78px;top:2px;letter-spacing:.45px"><i>MCC</i> 后膨胀材质</div></div><div class="row" style="top:262px"><svg style="left:4px;top:5px" width="14" height="9" viewBox="0 0 14 9"><path d="M.5 4.500C3 .8 11 .8 13.500 4.500 11 8.200 3 8.200 .5 4.500z" fill="#8a8a8a"/><circle cx="7" cy="4.500" r="2.300" fill="#535353"/><circle cx="7" cy="4.500" r="1.100" fill="#8a8a8a"/></svg><svg style="left:57px;top:4px" width="12" height="12" viewBox="0 0 12 12"><circle cx="6" cy="6" r="5" fill="none" stroke="#c8c8c8" stroke-width="1.200"/><circle cx="6" cy="6" r="3" fill="#8c8c8c"/></svg><div class="t" style="left:78px;top:2px;letter-spacing:.45px">边界约束 1</div></div><div class="row" style="top:282px"><svg style="left:4px;top:5px" width="14" height="9" viewBox="0 0 14 9"><path d="M.5 4.500C3 .8 11 .8 13.500 4.500 11 8.200 3 8.200 .5 4.500z" fill="#8a8a8a"/><circle cx="7" cy="4.500" r="2.300" fill="#535353"/><circle cx="7" cy="4.500" r="1.100" fill="#8a8a8a"/></svg><svg style="left:57px;top:4px" width="12" height="12" viewBox="0 0 12 12"><circle cx="6" cy="6" r="5" fill="none" stroke="#c8c8c8" stroke-width="1.200"/><circle cx="6" cy="6" r="3" fill="#8c8c8c"/></svg><div class="t" style="left:78px;top:2px;letter-spacing:.45px">边界约束 2</div></div><div class="row" style="top:302px"><svg style="left:4px;top:5px" width="14" height="9" viewBox="0 0 14 9"><path d="M.5 4.500C3 .8 11 .8 13.500 4.500 11 8.200 3 8.200 .5 4.500z" fill="#8a8a8a"/><circle cx="7" cy="4.500" r="2.300" fill="#535353"/><circle cx="7" cy="4.500" r="1.100" fill="#8a8a8a"/></svg><svg style="left:57px;top:4px" width="12" height="12" viewBox="0 0 12 12"><circle cx="6" cy="6" r="5" fill="none" stroke="#c8c8c8" stroke-width="1.200"/><circle cx="6" cy="6" r="3" fill="#8c8c8c"/></svg><div class="t" style="left:78px;top:2px;letter-spacing:.45px">边界约束 3</div></div><div class="row" style="top:322px"><svg style="left:4px;top:5px" width="14" height="9" viewBox="0 0 14 9"><path d="M.5 4.500C3 .8 11 .8 13.500 4.500 11 8.200 3 8.200 .5 4.500z" fill="#8a8a8a"/><circle cx="7" cy="4.500" r="2.300" fill="#535353"/><circle cx="7" cy="4.500" r="1.100" fill="#8a8a8a"/></svg><svg style="left:41px;top:5px" width="15" height="10" viewBox="0 0 15 10"><rect x="0" y=".5" width="10" height="9" rx="1" fill="#e4e4e4"/><path d="M10 5l4.500-3.800v7.600z" fill="#e4e4e4"/></svg><div class="t" style="left:63px;top:2px;letter-spacing:.45px">默认相机</div></div><div class="row" style="top:342px;height:1px"></div><div class="eyecol"></div><div class="abs" style="left:240px;top:62px;width:5px;height:330px;background:#4b4b4b"></div><svg style="left:74px;top:400px" width="10" height="12" viewBox="0 0 10 12"><path d="M1 3.500h8v6.500c0 1-8 1-8 0z" fill="#9a9a9a"/><path d="M1 3.500l1.500-2.500h5L9 3.500" fill="none" stroke="#9a9a9a" stroke-width="1.100"/></svg><svg style="left:102px;top:399px" width="11" height="14" viewBox="0 0 11 14"><path d="M5.500 .5a4.500 4.500 0 0 1 2.600 8.200v1.800H2.900V8.700A4.500 4.500 0 0 1 5.500 .5z" fill="#dcdcdc"/><path d="M3.300 11.800h4.400M3.800 13.300h3.400" stroke="#dcdcdc" stroke-width="1"/></svg><svg style="left:111px;top:414px" width="5" height="3" viewBox="0 0 5 3"><path d="M0 0h5L2.500 3z" fill="#ddd"/></svg><svg style="left:130px;top:400px" width="14" height="13" viewBox="0 0 14 13"><rect x=".6" y=".6" width="12.800" height="11.800" fill="none" stroke="#dcdcdc" stroke-width="1.200"/><rect x=".6" y=".6" width="12.800" height="2.500" fill="#dcdcdc"/><path d="M7 4.800l3.200 1.400v3.300L7 11l-3.200-1.500V6.200z" fill="#dcdcdc"/></svg><svg style="left:158px;top:399px" width="14" height="14" viewBox="0 0 14 14"><path d="M5 .5h4l-1.200 3.500H6.200zM7 4v5" stroke="#dcdcdc" stroke-width="1.200" fill="#dcdcdc"/><path d="M3 9h8v2H3zM.5 11h13v2.200H.5z" fill="#dcdcdc"/></svg><svg style="left:187px;top:399px" width="16" height="14" viewBox="0 0 16 14"><path d="M4 .5h3.500L6.500 4H5zM5.800 4v5" stroke="#9a9a9a" stroke-width="1.200" fill="#9a9a9a"/><path d="M2 9h7v2H2zM.5 11h9v2.200h-9z" fill="#9a9a9a"/><circle cx="12.500" cy="10" r="2.800" fill="none" stroke="#9a9a9a" stroke-width="1"/><path d="M10.500 12l4-4" stroke="#9a9a9a" stroke-width="1"/></svg><svg style="left:217px;top:400px" width="11" height="13" viewBox="0 0 11 13"><path d="M.5 2.500h10M3.500 2.500V.8h4v1.700" stroke="#8c8c8c" stroke-width="1.200" fill="none"/><path d="M1.500 4h8v8.500h-8z" fill="none" stroke="#8c8c8c" stroke-width="1.200"/><path d="M4 5.500v5.500M5.500 5.500v5.500M7 5.500v5.500" stroke="#8c8c8c" stroke-width=".9"/></svg></div>
<div id="bottomstrip" class="abs"><div class="abs" style="left:16px;top:0;width:86px;height:4px;background:linear-gradient(90deg,#7a3a4e,#a56a80 50%,#8a4a5e)"></div><div class="abs" style="left:361px;top:0;width:38px;height:4px;background:#4d6b58"></div><div class="abs" style="left:410px;top:0;width:56px;height:4px;overflow:hidden;font-size:12px;line-height:12px;color:#222"><span style="position:absolute;top:-1px;left:0">00后极客</span></div><div class="abs" style="left:593px;top:0;width:34px;height:2px;background:#d4d4d4"></div></div><div class="t" style="left:969px;top:867px;height:40px;line-height:40px;font-size:32px;font-weight:bold;color:#fff;letter-spacing:0;text-shadow:2px 2px 1px #1a1a1a,1px 1px 0 #1a1a1a,-1px -1px 1px rgba(0,0,0,.35);font-family:'Liberation Sans','Noto Sans CJK SC',sans-serif"><span style="font-weight:900">头条</span><span style="font-weight:500;margin-left:5px;letter-spacing:.7px">@智绘源设计</span></div>
</body>
</html>
